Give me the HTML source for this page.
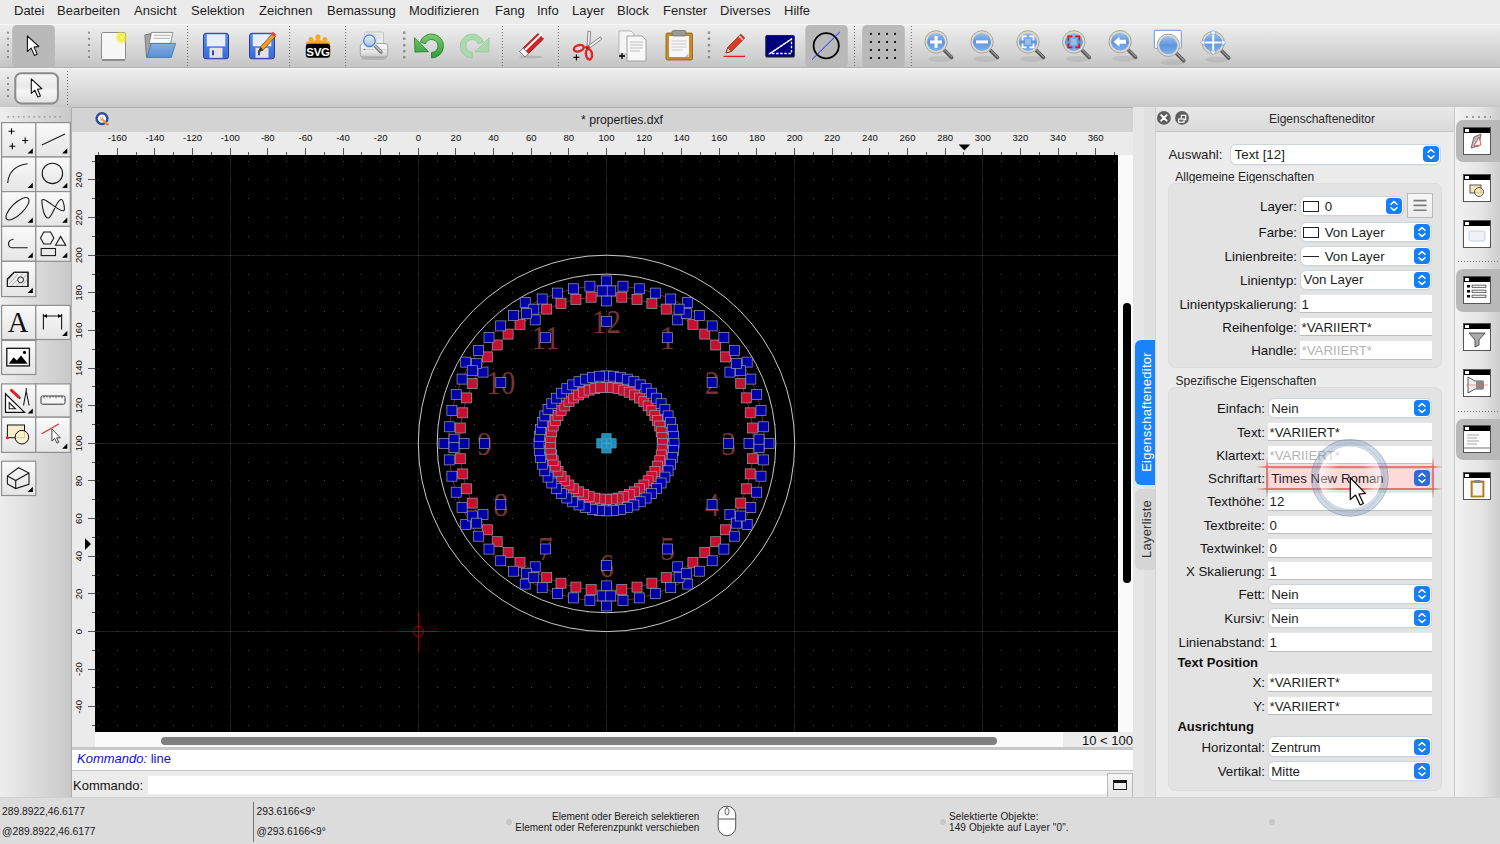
<!DOCTYPE html>
<html><head><meta charset="utf-8">
<style>
*{box-sizing:border-box}
html,body{margin:0;padding:0}
body{width:1500px;height:844px;position:relative;overflow:hidden;background:#ececec;font-family:"Liberation Sans",sans-serif;color:#1d1d1d;font-size:13px}
.abs{position:absolute}
.t{position:absolute;white-space:nowrap;line-height:1}
#menubar{left:0;top:0;width:1500px;height:24px;background:#ebebeb}
#menubar span{position:absolute;top:2.8px;font-size:13px;color:#1e1e1e}
#tb1{left:0;top:24px;width:1500px;height:44px;background:linear-gradient(#eeeeee,#e0e0e0 35%,#d0d0d0 75%,#c4c4c4);border-top:1px solid #f7f7f7;border-bottom:1.5px solid #b0b0b0}
#tb2{left:0;top:68px;width:1500px;height:40px;background:linear-gradient(#ededed,#e0e0e0 40%,#d0d0d0 85%,#c8c8c8);border-top:1px solid #f7f7f7;border-bottom:1.5px solid #b2b2b2}
.grip{position:absolute;width:3px;background:radial-gradient(circle,#8c8c8c 1px,transparent 1.3px) 0 0/3px 6px}
.dsep{position:absolute;width:1px;background:linear-gradient(#6e6e6e 50%,transparent 50%) 0 0/1px 3px}
.sel{position:absolute;background:#b9b9b9;border-radius:5px}
#left{left:0;top:107px;width:72px;height:691px;background:linear-gradient(90deg,#ededed 0,#e6e6e6 55%,#cfcfcf 90%,#c2c2c2 100%)}
.lb{position:absolute;width:34px;height:34px;background:linear-gradient(#fbfbfb,#ececec 60%,#e4e4e4);border:1px solid #a9a9a9}
.lb svg{position:absolute;left:0;top:0}
#mdititle{left:72px;top:108px;width:1061px;height:24px;background:#d3d3d3}
#rulertop{left:72px;top:132px;width:1061px;height:23px;background:#ebebeb}
#rulerleft{left:72px;top:155px;width:23px;height:592px;background:#ebebeb}
#vscroll{left:1118px;top:155px;width:15px;height:577px;background:#fafafa}
#hscroll{left:95px;top:732px;width:1038px;height:15px;background:#fafafa}
#cmdhist{left:72px;top:747px;width:1061px;height:24px;background:#fff;border-top:3px solid #c8c8c8;border-bottom:1px solid #c4c4c4}
#cmdrow{left:72px;top:771px;width:1061px;height:27px;background:#ebebeb}
#docktabs{left:1133px;top:107px;width:22px;height:691px;background:#e6e6e6}
#dock{left:1155px;top:107px;width:300px;height:691px;background:#ececec;border-left:1px solid #cfcfcf}
#rtb{left:1455px;top:107px;width:45px;height:691px;background:linear-gradient(90deg,#f1f1f1,#e4e4e4 60%,#cdcdcd)}
#status{left:0;top:798px;width:1500px;height:46px;background:#dcdcdc}
.lbl{position:absolute;text-align:right;font-size:13px;color:#1d1d1d;white-space:nowrap;line-height:1}
.cb{position:absolute;height:21px;background:#fff;border:1px solid #d3d3d3;border-radius:6px;box-shadow:0 0.5px 1px rgba(0,0,0,.08)}
.cb .v{position:absolute;left:4px;top:4px;font-size:13px;line-height:1;white-space:nowrap;color:#1d1d1d}
.step{position:absolute;right:2px;top:2px;width:16px;height:16px;background:#137cf6;border-radius:4px}
.inp{position:absolute;height:20px;background:#fff;border-bottom:1px solid #c0c0c0;border-top:1px solid #e8e8e8}
.inp .v{position:absolute;left:2px;top:4px;font-size:13px;line-height:1;white-space:nowrap;color:#1d1d1d}
.grp{position:absolute;background:#e3e3e3;border-radius:6px;border:1px solid #dedede}
.rb{position:absolute;left:1463px;width:28px;height:28px;background:#fff;border:1px solid #555}
.rb:before{content:"";position:absolute;left:0;top:0;right:0;height:5px;background:#000}
.rb:after{content:"";position:absolute;left:1px;top:1px;width:4px;height:3px;background:#fff}
</style></head><body>
<div id="menubar" class="abs">
<span style="left:14px">Datei</span><span style="left:57px">Bearbeiten</span><span style="left:134px">Ansicht</span><span style="left:191px">Selektion</span><span style="left:259px">Zeichnen</span><span style="left:327px">Bemassung</span><span style="left:409px">Modifizieren</span><span style="left:495px">Fang</span><span style="left:537px">Info</span><span style="left:572px">Layer</span><span style="left:617px">Block</span><span style="left:663px">Fenster</span><span style="left:720px">Diverses</span><span style="left:784px">Hilfe</span>
</div>
<div id="tb1" class="abs"></div>
<div id="tb2" class="abs"></div>
<svg class="abs" style="left:0;top:22px" width="1500" height="86" viewBox="0 22 1500 86">
<defs><linearGradient id="lg" x1="0" y1="0" x2="0" y2="1"><stop offset="0" stop-color="#9cc0ee"/><stop offset=".5" stop-color="#5d95dc"/><stop offset="1" stop-color="#7fb0ee"/></linearGradient><linearGradient id="fl" x1="0" y1="0" x2="0" y2="1"><stop offset="0" stop-color="#5a8fe8"/><stop offset="1" stop-color="#3a6ad8"/></linearGradient><linearGradient id="b2" x1="0" y1="0" x2="0" y2="1"><stop offset="0" stop-color="#f6f6f6"/><stop offset=".45" stop-color="#e9e9e9"/><stop offset=".6" stop-color="#f7f7f7"/><stop offset="1" stop-color="#e2e2e2"/></linearGradient><radialGradient id="glow"><stop offset="0" stop-color="#ffffc0"/><stop offset=".35" stop-color="#f2ea2a"/><stop offset="1" stop-color="#f2ea2a" stop-opacity="0"/></radialGradient></defs>
<rect x="7.0" y="31.7" width="2" height="2" fill="#8e8e8e"/><rect x="7.0" y="37.8" width="2" height="2" fill="#8e8e8e"/><rect x="7.0" y="44.0" width="2" height="2" fill="#8e8e8e"/><rect x="7.0" y="50.0" width="2" height="2" fill="#8e8e8e"/><rect x="7.0" y="56.0" width="2" height="2" fill="#8e8e8e"/>
<rect x="12.2" y="25.0" width="42.7" height="42.5" rx="4.5" fill="#b9b9b9"/>
<path transform="translate(27.4 35.9) scale(1.00)" d="M0 0V15.6L3.8 12.2 7 19.5 9.8 18.3 6.7 11.2 11.4 10.6z" fill="#fff" stroke="#111" stroke-width="1.10" stroke-linejoin="round"/>
<rect x="88.0" y="31.7" width="2" height="2" fill="#8e8e8e"/><rect x="88.0" y="37.8" width="2" height="2" fill="#8e8e8e"/><rect x="88.0" y="44.0" width="2" height="2" fill="#8e8e8e"/><rect x="88.0" y="50.0" width="2" height="2" fill="#8e8e8e"/><rect x="88.0" y="56.0" width="2" height="2" fill="#8e8e8e"/>
<rect x="101.5" y="32.5" width="24" height="27" rx="1.2" fill="#f7f7f7" stroke="#8c8c8c" stroke-width="1"/><path d="M102 60.3h23" stroke="#888" stroke-width="1.2"/><circle cx="121.5" cy="37.6" r="7" fill="url(#glow)"/>
<defs><linearGradient id="fg" x1="0" y1="0" x2="0" y2="1"><stop offset="0" stop-color="#86aee0"/><stop offset="1" stop-color="#5b8fd6"/></linearGradient></defs>
<path d="M144.8 35 150.5 33.6 150 56.8H146.5z" fill="#a4a4a4" stroke="#6a6a6a" stroke-width=".8"/><path d="M151.4 32.4H172.8L170.6 43.6H149.2z" fill="#fafafa" stroke="#777" stroke-width=".8"/><path d="M154 35.3h16.5M153.5 38.3h16.5" stroke="#bdbdbd" stroke-width="1.2"/><path d="M151.4 43.4H175.6L171.3 57.4H146.7C148.6 52 150 47 151.4 43.4z" fill="url(#fg)" stroke="#3f70b8" stroke-width=".8"/>
<path d="M187.6 26V66" stroke="#6a6a6a" stroke-width="1" stroke-dasharray="1 2"/>
<rect x="203.5" y="33.3" width="25" height="25.5" rx="2.5" fill="url(#fl)" stroke="#2a3a9a" stroke-width="1"/><rect x="206.8" y="34.3" width="18.5" height="12" fill="#e8eefa"/><rect x="209.5" y="47.8" width="13" height="10" fill="#e2e2e2"/><rect x="212.0" y="50.3" width="2" height="5" fill="#2a4ac8"/>
<rect x="249.5" y="33.3" width="25" height="25.5" rx="2.5" fill="url(#fl)" stroke="#2a3a9a" stroke-width="1"/><rect x="252.8" y="34.3" width="18.5" height="12" fill="#e8eefa"/><rect x="255.5" y="47.8" width="13" height="10" fill="#e2e2e2"/><rect x="258.0" y="50.3" width="2" height="5" fill="#2a4ac8"/>
<path d="M258.5 52l2-5 12-13.5 3 2.8-12 13.5z" fill="#f0a020" stroke="#8a4a10" stroke-width=".8"/><path d="M271 33.8l2-2 3.2 3-2 2z" fill="#e04040"/><path d="M258.5 52l2-5 3 3z" fill="#333"/>
<path d="M289.6 26V66" stroke="#6a6a6a" stroke-width="1" stroke-dasharray="1 2"/>
<g><circle cx="318" cy="37" r="2.6" fill="#f5a623"/><circle cx="311" cy="39.5" r="2.4" fill="#f5a623"/><circle cx="325" cy="39.5" r="2.4" fill="#f5a623"/><circle cx="308" cy="43.5" r="2.2" fill="#f5a623"/><circle cx="328" cy="43.5" r="2.2" fill="#f5a623"/><path d="M306 44l12-5 12 5z" fill="#f5a623"/><rect x="305.8" y="43.8" width="24.4" height="14" rx="3" fill="#000"/><text x="318" y="55.6" font-family="Liberation Sans" font-weight="bold" font-size="11.5" fill="#fff" text-anchor="middle" letter-spacing="-.3">SVG</text></g>
<path d="M345.6 26V66" stroke="#6a6a6a" stroke-width="1" stroke-dasharray="1 2"/>
<defs><linearGradient id="pg" x1="0" y1="0" x2="0" y2="1"><stop offset="0" stop-color="#fbfbfb"/><stop offset=".6" stop-color="#e6e6e6"/><stop offset="1" stop-color="#c8c8c8"/></linearGradient><linearGradient id="lg2" x1="0" y1="0" x2="0" y2="1"><stop offset="0" stop-color="#e4eefa"/><stop offset=".55" stop-color="#c6d8ee"/><stop offset="1" stop-color="#a9c4e6"/></linearGradient></defs>
<ellipse cx="374" cy="58.5" rx="13" ry="1.6" fill="#000" opacity=".12"/><rect x="364.5" y="32" width="19" height="14" rx="1" fill="#ececec" stroke="#b8b8b8" stroke-width=".8"/><path d="M367 35h14M367 38h14" stroke="#d2d2d2" stroke-width="1"/><rect x="360.3" y="43.5" width="27.5" height="13.5" rx="2.5" fill="url(#pg)" stroke="#9c9c9c" stroke-width=".9"/><path d="M362.5 49.5h23" stroke="#c8c8c8" stroke-width=".8"/><circle cx="364.5" cy="49.5" r=".7" fill="#666"/><path d="M374.8 45.6l6.2 6.4" stroke="#777" stroke-width="3.4" stroke-linecap="round"/><path d="M375 45.4l6 6.2" stroke="#c4c4c4" stroke-width="1.4" stroke-linecap="round"/><circle cx="369.5" cy="40.7" r="7.2" fill="#f4f4f4" stroke="#c8c8c8" stroke-width=".6"/><circle cx="369.5" cy="40.7" r="5.8" fill="url(#lg2)" stroke="#4a82cc" stroke-width="1.3"/>
<rect x="403.0" y="31.5" width="2.4" height="2.4" fill="#8e8e8e"/><rect x="403.0" y="37.5" width="2.4" height="2.4" fill="#8e8e8e"/><rect x="403.0" y="44.0" width="2.4" height="2.4" fill="#8e8e8e"/><rect x="403.0" y="50.0" width="2.4" height="2.4" fill="#8e8e8e"/><rect x="403.0" y="56.0" width="2.4" height="2.4" fill="#8e8e8e"/>
<defs><linearGradient id="ug" x1="0" y1="0" x2="0" y2="1"><stop offset="0" stop-color="#7ccf6a"/><stop offset="1" stop-color="#2e9a3a"/></linearGradient></defs>
<path d="M420.2 41.9A12 12 0 1 1 431.5 58V52.5A6.5 6.5 0 1 0 425.4 43.8zM414.4 37.7 415 52.1 428.5 51.7z" fill="url(#ug)" stroke="#1e7a2e" stroke-width=".8" stroke-linejoin="round"/>
<path transform="translate(903.7 0) scale(-1 1)" d="M420.2 41.9A12 12 0 1 1 431.5 58V52.5A6.5 6.5 0 1 0 425.4 43.8zM414.4 37.7 415 52.1 428.5 51.7z" fill="#a6dba8" stroke="#8cc49a" stroke-width=".8" stroke-linejoin="round" opacity=".9"/>
<path d="M502.4 26V66" stroke="#6a6a6a" stroke-width="1" stroke-dasharray="1 2"/>
<ellipse cx="531" cy="57" rx="12" ry="1.5" fill="#000" opacity=".12"/><path d="M519.5 51.5 538 33.5l5.5 5.5-18.5 18z" fill="#d42020" stroke="#8a1010" stroke-width=".8"/><path d="M522.5 48.5 540 31.5" stroke="#fff" stroke-width="2.2" transform="translate(1.5 2.5)"/><path d="M519.5 51.5l3.5-3.5 5.5 5.5-3.5 3.5z" fill="#f4f4f4" stroke="#777" stroke-width=".8"/>
<path d="M558.4 26V66" stroke="#6a6a6a" stroke-width="1" stroke-dasharray="1 2"/>
<path d="M588 31.2 590.6 31.4 589.6 47.2 587 47z" fill="#f6f6f6" stroke="#6a6a6a" stroke-width=".8"/><path d="M600.4 36.8 601.6 39.2 590.2 47.6 588.6 45.6z" fill="#f6f6f6" stroke="#6a6a6a" stroke-width=".8"/><path d="M583.8 47.6 588.2 46.4 589.6 50" stroke="#e02424" stroke-width="2"/><ellipse cx="578.8" cy="48.3" rx="5" ry="3" transform="rotate(-18 578.8 48.3)" fill="none" stroke="#e02424" stroke-width="2.4"/><ellipse cx="589" cy="54.3" rx="3" ry="5.2" transform="rotate(-8 589 54.3)" fill="none" stroke="#e02424" stroke-width="2.4"/><path d="M573.4 57.4h6M576.4 54.4v6" stroke="#000" stroke-width="1.1"/>
<path d="M619 31h12l3 3v20h-15z" fill="#f4f4f4" stroke="#aaa" stroke-width=".8"/><path d="M627 36h15l4 4v21h-19z" fill="#f8f8f8" stroke="#999" stroke-width=".9"/><path d="M630 42h13M630 45h13M630 48h13M630 51h10" stroke="#bbb" stroke-width="1"/><path d="M619 56h6M622 53v6" stroke="#000" stroke-width="1.3"/>
<rect x="666" y="33" width="26.5" height="27" rx="1.5" fill="#c88a2a" stroke="#8a5a18" stroke-width=".8"/><path d="M669 36h20v21h-20z" fill="#f7f7f7"/><path d="M671.5 41h15M671.5 44h15M671.5 47h15M671.5 50h11" stroke="#c8c8c8" stroke-width="1"/><rect x="672" y="30.5" width="14" height="5.5" rx="1.5" fill="#9a9a90" stroke="#666" stroke-width=".7"/><path d="M685 57l3.5-3.5v3.5z" fill="#bbb"/>
<rect x="707.8" y="31.5" width="2.4" height="2.4" fill="#8e8e8e"/><rect x="707.8" y="37.5" width="2.4" height="2.4" fill="#8e8e8e"/><rect x="707.8" y="44.0" width="2.4" height="2.4" fill="#8e8e8e"/><rect x="707.8" y="50.0" width="2.4" height="2.4" fill="#8e8e8e"/><rect x="707.8" y="56.0" width="2.4" height="2.4" fill="#8e8e8e"/>
<path d="M723.5 56.4h21.5" stroke="#e02020" stroke-width="1.3"/><path d="M726 53l1.8-5.5 13-13.2 3.8 3.7-13 13.2z" fill="#e03a2a" stroke="#7a2a10" stroke-width=".9"/><path d="M726 53l1.8-5.5 3.7 3.8z" fill="#f0c8a0" stroke="#7a2a10" stroke-width=".7"/><path d="M739 36l3.8 3.7" stroke="#ddd" stroke-width="1.4"/>
<rect x="765.8" y="35.5" width="28.5" height="21.5" rx="1" fill="#00007e" stroke="#222" stroke-width="1"/><path d="M770 53.5 791.5 39v14.5z" fill="none" stroke="#fff" stroke-width="1.3" stroke-dasharray="2.5 1.6"/><path d="M770 53.5 791.5 39" stroke="#fff" stroke-width="1.3"/>
<rect x="805.3" y="25.0" width="42.5" height="42.5" rx="4.5" fill="#b9b9b9"/>
<circle cx="826.2" cy="45.8" r="12.6" fill="none" stroke="#000" stroke-width="1.8"/><path d="M812 59.6 839.8 32" stroke="#1030ff" stroke-width="1"/>
<path d="M854.5 26V66" stroke="#6a6a6a" stroke-width="1" stroke-dasharray="1 2"/>
<rect x="862.2" y="25.0" width="42.6" height="42.5" rx="4.5" fill="#b9b9b9"/>
<rect x="869.9" y="32.9" width="2" height="2" fill="#111"/>
<rect x="869.9" y="41.0" width="2" height="2" fill="#111"/>
<rect x="869.9" y="49.0" width="2" height="2" fill="#111"/>
<rect x="869.9" y="57.0" width="2" height="2" fill="#111"/>
<rect x="878.0" y="32.9" width="2" height="2" fill="#111"/>
<rect x="878.0" y="41.0" width="2" height="2" fill="#111"/>
<rect x="878.0" y="49.0" width="2" height="2" fill="#111"/>
<rect x="878.0" y="57.0" width="2" height="2" fill="#111"/>
<rect x="886.0" y="32.9" width="2" height="2" fill="#111"/>
<rect x="886.0" y="41.0" width="2" height="2" fill="#111"/>
<rect x="886.0" y="49.0" width="2" height="2" fill="#111"/>
<rect x="886.0" y="57.0" width="2" height="2" fill="#111"/>
<rect x="894.0" y="32.9" width="2" height="2" fill="#111"/>
<rect x="894.0" y="41.0" width="2" height="2" fill="#111"/>
<rect x="894.0" y="49.0" width="2" height="2" fill="#111"/>
<rect x="894.0" y="57.0" width="2" height="2" fill="#111"/>
<path d="M911.3 26V66" stroke="#6a6a6a" stroke-width="1" stroke-dasharray="1 2"/>
<g><ellipse cx="940.1" cy="58.9" rx="12" ry="3" fill="#000" opacity=".07"/><path d="M944.1 49.9l7.5 7.5" stroke="#555" stroke-width="3.6" stroke-linecap="round"/><path d="M944.4 49.6l7.5 7.5" stroke="#999" stroke-width="1.2" stroke-linecap="round"/><circle cx="936.1" cy="41.9" r="11.2" fill="#ddd9cf" stroke="#aaa69a" stroke-width="1"/><circle cx="936.1" cy="41.9" r="9" fill="url(#lg)"/><path d="M936.1 36v11.8M930.2 41.9H942" stroke="#fff" stroke-width="3"/></g>
<g><ellipse cx="986.0" cy="58.9" rx="12" ry="3" fill="#000" opacity=".07"/><path d="M990.0 49.9l7.5 7.5" stroke="#555" stroke-width="3.6" stroke-linecap="round"/><path d="M990.3 49.6l7.5 7.5" stroke="#999" stroke-width="1.2" stroke-linecap="round"/><circle cx="982.0" cy="41.9" r="11.2" fill="#ddd9cf" stroke="#aaa69a" stroke-width="1"/><circle cx="982.0" cy="41.9" r="9" fill="url(#lg)"/><path d="M976 41.9h12" stroke="#fff" stroke-width="3"/></g>
<g><ellipse cx="1032.0" cy="58.9" rx="12" ry="3" fill="#000" opacity=".07"/><path d="M1036.0 49.9l7.5 7.5" stroke="#555" stroke-width="3.6" stroke-linecap="round"/><path d="M1036.3 49.6l7.5 7.5" stroke="#999" stroke-width="1.2" stroke-linecap="round"/><circle cx="1028.0" cy="41.9" r="11.2" fill="#ddd9cf" stroke="#aaa69a" stroke-width="1"/><circle cx="1028.0" cy="41.9" r="9" fill="url(#lg)"/><path d="M1022.5 40.4v-4h4M1029.5 36.4h4v4M1033.5 43.4v4h-4M1026.5 47.4h-4v-4" stroke="#fff" stroke-width="1.8" fill="none"/><rect x="1025.0" y="38.9" width="6" height="6" fill="#a8c4ec" opacity=".8"/></g>
<g><ellipse cx="1077.8" cy="58.9" rx="12" ry="3" fill="#000" opacity=".07"/><path d="M1081.8 49.9l7.5 7.5" stroke="#555" stroke-width="3.6" stroke-linecap="round"/><path d="M1082.1 49.6l7.5 7.5" stroke="#999" stroke-width="1.2" stroke-linecap="round"/><circle cx="1073.8" cy="41.9" r="11.2" fill="#ddd9cf" stroke="#aaa69a" stroke-width="1"/><circle cx="1073.8" cy="41.9" r="9" fill="url(#lg)"/><path d="M1068.3 40.4v-4h4M1075.3 36.4h4v4M1079.3 43.4v4h-4M1072.3 47.4h-4v-4" stroke="#e01010" stroke-width="1.8" fill="none"/><rect x="1070.8" y="38.9" width="6" height="6" fill="#a8c4ec" opacity=".8"/></g>
<g><ellipse cx="1124.1" cy="58.7" rx="12" ry="3" fill="#000" opacity=".07"/><path d="M1128.1 49.7l7.5 7.5" stroke="#555" stroke-width="3.6" stroke-linecap="round"/><path d="M1128.4 49.4l7.5 7.5" stroke="#999" stroke-width="1.2" stroke-linecap="round"/><circle cx="1120.1" cy="41.7" r="11.2" fill="#ddd9cf" stroke="#aaa69a" stroke-width="1"/><circle cx="1120.1" cy="41.7" r="9" fill="url(#lg)"/><path d="M1113.5 41.7l6-5v3h6.5v4h-6.5v3z" fill="#fff"/></g>
<rect x="1154.3" y="30.3" width="27" height="18" rx="1" fill="#fff" stroke="#6b94cc" stroke-width="1"/>
<g><ellipse cx="1172.3" cy="62.3" rx="12" ry="3" fill="#000" opacity=".07"/><path d="M1176.3 53.3l7.5 7.5" stroke="#555" stroke-width="3.6" stroke-linecap="round"/><path d="M1176.6 53.0l7.5 7.5" stroke="#999" stroke-width="1.2" stroke-linecap="round"/><circle cx="1168.3" cy="45.3" r="11.2" fill="#ddd9cf" stroke="#aaa69a" stroke-width="1"/><circle cx="1168.3" cy="45.3" r="9" fill="url(#lg)"/></g>
<g><ellipse cx="1217.2" cy="59.6" rx="12" ry="3" fill="#000" opacity=".07"/><path d="M1221.2 50.6l7.5 7.5" stroke="#555" stroke-width="3.6" stroke-linecap="round"/><path d="M1221.5 50.3l7.5 7.5" stroke="#999" stroke-width="1.2" stroke-linecap="round"/><circle cx="1213.2" cy="42.6" r="11.2" fill="#ddd9cf" stroke="#aaa69a" stroke-width="1"/><circle cx="1213.2" cy="42.6" r="9" fill="url(#lg)"/><path d="M1213.2 31v23M1201.5 42.6h23" stroke="#fff" stroke-width="2"/><path d="M1213.2 30l-3 4h6zM1213.2 55l-3-4h6zM1200.5 42.6l4-3v6zM1226 42.6l-4-3v6z" fill="#fff" stroke="#5a8ad0" stroke-width=".5"/></g>
<rect x="7.0" y="76.9" width="2" height="2" fill="#8e8e8e"/><rect x="7.0" y="83.0" width="2" height="2" fill="#8e8e8e"/><rect x="7.0" y="89.0" width="2" height="2" fill="#8e8e8e"/><rect x="7.0" y="95.0" width="2" height="2" fill="#8e8e8e"/>
<rect x="15.3" y="73.2" width="42.6" height="30.2" rx="6" fill="url(#b2)" stroke="#8a8a8a" stroke-width="2"/>
<path transform="translate(31.3 78.9) scale(0.93)" d="M0 0V15.6L3.8 12.2 7 19.5 9.8 18.3 6.7 11.2 11.4 10.6z" fill="#fff" stroke="#111" stroke-width="1.18" stroke-linejoin="round"/>
<path d="M67.5 71V106" stroke="#6a6a6a" stroke-width="1" stroke-dasharray="1 2"/>
</svg>
<div id="left" class="abs"></div>
<div class="abs" style="left:0;top:107px;width:72px;height:691px;background:linear-gradient(90deg,#eeeeee 0,#dcdcdc 45%,#c9c9c9 97%,#b9b9b9 100%)"></div>
<div class="abs" style="left:71px;top:107px;width:1px;height:691px;background:#b0b0b0"></div>
<svg class="abs" style="left:0;top:107px" width="72" height="400" viewBox="0 107 72 400">
<defs><linearGradient id="lbg" x1="0" y1="0" x2="0" y2="1"><stop offset="0" stop-color="#fafafa"/><stop offset=".5" stop-color="#efefef"/><stop offset="1" stop-color="#e6e6e6"/></linearGradient></defs>
<rect x="7.5" y="116" width="1.6" height="1.6" fill="#a0a0a0"/>
<rect x="12.7" y="116" width="1.6" height="1.6" fill="#a0a0a0"/>
<rect x="17.9" y="116" width="1.6" height="1.6" fill="#a0a0a0"/>
<rect x="23.1" y="116" width="1.6" height="1.6" fill="#a0a0a0"/>
<rect x="28.3" y="116" width="1.6" height="1.6" fill="#a0a0a0"/>
<rect x="33.5" y="116" width="1.6" height="1.6" fill="#a0a0a0"/>
<rect x="38.7" y="116" width="1.6" height="1.6" fill="#a0a0a0"/>
<rect x="43.9" y="116" width="1.6" height="1.6" fill="#a0a0a0"/>
<rect x="49.1" y="116" width="1.6" height="1.6" fill="#a0a0a0"/>
<rect x="54.3" y="116" width="1.6" height="1.6" fill="#a0a0a0"/>
<rect x="59.5" y="116" width="1.6" height="1.6" fill="#a0a0a0"/>
<rect x="1.60" y="122.60" width="34.20" height="34.40" fill="url(#lbg)" stroke="#8f8f8f" stroke-width="1.2"/><path d="M8.5 131.3h6M11.5 128.3v6M22.2 140.5h6M25.2 137.5v6M9.3 146.2h6M12.3 143.2v6" stroke="#000" stroke-width="1.1"/><path d="M27.6 153.4h5.2v-5.2z" fill="#000"/>
<rect x="35.80" y="122.60" width="34.50" height="34.40" fill="url(#lbg)" stroke="#8f8f8f" stroke-width="1.2"/><path d="M41.8 144.9 65 133.9" fill="none" stroke="#1a1a1a" stroke-width="1.1"/><path d="M62.1 153.4h5.2v-5.2z" fill="#000"/>
<rect x="1.60" y="157.00" width="34.20" height="34.60" fill="url(#lbg)" stroke="#8f8f8f" stroke-width="1.2"/><path d="M7.7 183C8.5 172 16 165 27.6 163.8" fill="none" stroke="#1a1a1a" stroke-width="1.1"/><path d="M27.6 188.0h5.2v-5.2z" fill="#000"/>
<rect x="35.80" y="157.00" width="34.50" height="34.60" fill="url(#lbg)" stroke="#8f8f8f" stroke-width="1.2"/><circle cx="52.4" cy="173.4" r="10.2" fill="none" stroke="#1a1a1a" stroke-width="1.1"/><path d="M62.1 188.0h5.2v-5.2z" fill="#000"/>
<rect x="1.60" y="191.60" width="34.20" height="34.80" fill="url(#lbg)" stroke="#8f8f8f" stroke-width="1.2"/><ellipse cx="17.5" cy="208.8" rx="15" ry="5.8" transform="rotate(-44 17.5 208.8)" fill="none" stroke="#1a1a1a" stroke-width="1.1"/><path d="M27.6 222.8h5.2v-5.2z" fill="#000"/>
<rect x="35.80" y="191.60" width="34.50" height="34.80" fill="url(#lbg)" stroke="#8f8f8f" stroke-width="1.2"/><path d="M41.8 200.2C42.5 212 45.5 218.5 48.5 218C52.5 217.5 56 200.5 61 199.5C63.5 199 65 209 64 210.5C60.5 214 44.5 196 41.8 200.2z" fill="none" stroke="#1a1a1a" stroke-width="1.1"/><path d="M62.1 222.8h5.2v-5.2z" fill="#000"/>
<rect x="1.60" y="226.40" width="34.20" height="34.90" fill="url(#lbg)" stroke="#8f8f8f" stroke-width="1.2"/><path d="M13.5 239.2C9.5 239.5 8.3 242.5 8.5 244.2 8.8 246.5 10.5 247.8 12.5 247.8H27.7" fill="none" stroke="#1a1a1a" stroke-width="1.1"/><path d="M27.6 257.7h5.2v-5.2z" fill="#000"/>
<rect x="35.80" y="226.40" width="34.50" height="34.90" fill="url(#lbg)" stroke="#8f8f8f" stroke-width="1.2"/><path d="M40.5 238l3.3-6h6.7l3.3 6-3.3 6h-6.7z" fill="none" stroke="#1a1a1a" stroke-width="1.1"/><path d="M55.5 245.2l5.1-8.8 5.1 8.8z" fill="none" stroke="#1a1a1a" stroke-width="1.1"/><rect x="41.2" y="248.5" width="14.3" height="7.1" fill="none" stroke="#1a1a1a" stroke-width="1.1"/><path d="M62.1 257.7h5.2v-5.2z" fill="#000"/>
<rect x="1.60" y="261.30" width="34.20" height="35.30" fill="url(#lbg)" stroke="#8f8f8f" stroke-width="1.2"/><path d="M7.4 279 14.2 272.2H28V286.5H7.4z" fill="none" stroke="#1a1a1a" stroke-width="1.1"/><path d="M9 284l9-10M11 286.5l12-13M16 286.5l11-12M21 286.5l7-8M7.5 281l6-7" stroke="#888" stroke-width=".6"/><circle cx="20.6" cy="279.8" r="2.9" fill="#eee" stroke="#1a1a1a" stroke-width="1"/><path d="M7.4 279 14.2 272.2H28V286.5H7.4z" fill="none" stroke="#1a1a1a" stroke-width="1.1"/><path d="M27.6 293.0h5.2v-5.2z" fill="#000"/>
<rect x="1.60" y="305.40" width="34.20" height="34.10" fill="url(#lbg)" stroke="#8f8f8f" stroke-width="1.2"/><text x="18.1" y="331.7" font-family="Liberation Serif" font-size="28.5" text-anchor="middle" fill="#111">A</text>
<rect x="35.80" y="305.40" width="34.50" height="34.10" fill="url(#lbg)" stroke="#8f8f8f" stroke-width="1.2"/><path d="M43.4 313.9v15.6M61.6 313.9v15.6M43.4 316h18.2" fill="none" stroke="#1a1a1a" stroke-width="1.1"/><path d="M43.4 316l3.6-2v4zM61.6 316l-3.6-2v4z" fill="#000"/><path d="M62.1 335.9h5.2v-5.2z" fill="#000"/>
<rect x="1.60" y="340.50" width="34.20" height="34.00" fill="url(#lbg)" stroke="#8f8f8f" stroke-width="1.2"/><rect x="6.8" y="348.3" width="22.6" height="17.6" fill="#fff" stroke="#111" stroke-width="1.3"/><path d="M8.8 363.8l4.8-6.5 3.2 3.3 4.2-5.2 6.6 8.4z" fill="#000"/><circle cx="24.5" cy="352.4" r="1.6" fill="#000"/>
<rect x="1.60" y="383.90" width="34.20" height="33.30" fill="url(#lbg)" stroke="#8f8f8f" stroke-width="1.2"/><path d="M5.5 393.7V412.3H24.5z" fill="#fff" stroke="#111" stroke-width="1.2"/><path d="M9.2 402.5v6.3h6.3z" fill="none" stroke="#1a1a1a" stroke-width="1.1"/><path d="M10.5 389.5l8.5 7.8" stroke="#e02020" stroke-width="3"/><path d="M19 397.3l1.3 1.3" stroke="#333" stroke-width="2"/><path d="M26.2 388v3M26.2 391l-2.7 14.5M26.2 391l2.9 14.5" fill="none" stroke="#1a1a1a" stroke-width="1.1"/><path d="M27.6 413.6h5.2v-5.2z" fill="#000"/>
<rect x="35.80" y="383.90" width="34.50" height="33.30" fill="url(#lbg)" stroke="#8f8f8f" stroke-width="1.2"/><rect x="41" y="396" width="24" height="8.2" rx="1.5" fill="#f6f6f6" stroke="#333" stroke-width="1"/><path d="M44 396v2.5M47 396v1.5M50 396v2.5M53 396v1.5M56 396v2.5M59 396v1.5M62 396v2.5" stroke="#333" stroke-width=".7"/>
<rect x="1.60" y="417.20" width="34.20" height="35.20" fill="url(#lbg)" stroke="#8f8f8f" stroke-width="1.2"/><rect x="7.4" y="425" width="17.1" height="12.7" fill="#fbf1c9" stroke="#111" stroke-width="1"/><circle cx="21.9" cy="437.2" r="6.8" fill="#fbf1c9" fill-opacity=".85" stroke="#111" stroke-width="1"/><circle cx="7.4" cy="437.7" r="1.5" fill="#e02020"/>
<rect x="35.80" y="417.20" width="34.50" height="35.20" fill="url(#lbg)" stroke="#8f8f8f" stroke-width="1.2"/><path d="M41.7 433.8 58.7 424" stroke="#e03030" stroke-width="1.2"/><path d="M51.9 428.9v12.2l2.8-2.6 2.3 4.6 1.8-.8-2.2-4.5h3.7z" fill="#fff" stroke="#333" stroke-width=".9"/><path d="M62.1 448.8h5.2v-5.2z" fill="#000"/>
<rect x="1.60" y="461.20" width="34.20" height="34.30" fill="url(#lbg)" stroke="#8f8f8f" stroke-width="1.2"/><path d="M7.4 475.9l11.2-8.2 10.4 5.3v11.3l-13.3 4.3-8.3-4.7z" fill="none" stroke="#1a1a1a" stroke-width="1.1"/><path d="M7.4 475.9l8.3 4.6 13.3-7.5M15.7 480.5v8.1" fill="none" stroke="#1a1a1a" stroke-width="1.1"/><path d="M27.6 491.9h5.2v-5.2z" fill="#000"/>
</svg>
<div id="mdititle" class="abs"></div>
<div class="t" style="left:581px;top:114px;font-size:12.2px">* properties.dxf</div>
<svg class="abs" style="left:94px;top:110px" width="17" height="17" viewBox="0 0 17 17"><circle cx="8" cy="8.6" r="5.4" fill="#fff" stroke="#2c4c9c" stroke-width="2.4"/><path d="M6 6.5l1 3M9 6l-1 4M5.5 10h3" stroke="#c66" stroke-width=".6"/><path d="M8.5 9.5l4.5 4.5" stroke="#f0a020" stroke-width="2.2" stroke-linecap="round"/><circle cx="13.4" cy="14.3" r="1.2" fill="#e07070"/></svg>
<div id="rulertop" class="abs"></div>
<div id="rulerleft" class="abs"></div>
<svg class="abs" style="left:72px;top:132px" width="1061" height="615" viewBox="72 132 1061 615">
<path stroke="#555" stroke-width="1" d="M98.5 152V155M117.5 148V155M136.5 152V155M154.5 148V155M173.5 152V155M192.5 148V155M211.5 152V155M230.5 148V155M248.5 152V155M267.5 148V155M286.5 152V155M305.5 148V155M324.5 152V155M343.5 148V155M361.5 152V155M380.5 148V155M399.5 152V155M418.5 148V155M437.5 152V155M455.5 148V155M474.5 152V155M493.5 148V155M512.5 152V155M531.5 148V155M550.5 152V155M568.5 148V155M587.5 152V155M606.5 148V155M625.5 152V155M644.5 148V155M662.5 152V155M681.5 148V155M700.5 152V155M719.5 148V155M738.5 152V155M756.5 148V155M775.5 152V155M794.5 148V155M813.5 152V155M832.5 148V155M851.5 152V155M869.5 148V155M888.5 152V155M907.5 148V155M926.5 152V155M945.5 148V155M963.5 152V155M982.5 148V155M1001.5 152V155M1020.5 148V155M1039.5 152V155M1058.5 148V155M1076.5 152V155M1095.5 148V155M1114.5 152V155M92 725.5H95M88 706.5H95M92 687.5H95M88 669.5H95M92 650.5H95M88 631.5H95M92 612.5H95M88 593.5H95M92 575.5H95M88 556.5H95M92 537.5H95M88 518.5H95M92 499.5H95M88 480.5H95M92 462.5H95M88 443.5H95M92 424.5H95M88 405.5H95M92 386.5H95M88 368.5H95M92 349.5H95M88 330.5H95M92 311.5H95M88 292.5H95M92 274.5H95M88 255.5H95M92 236.5H95M88 217.5H95M92 198.5H95M88 179.5H95M92 161.5H95"/>
<g font-family="Liberation Sans" font-size="9.5" fill="#0a0a0a" text-anchor="middle"><text x="117.3" y="141">-160</text><text x="154.9" y="141">-140</text><text x="192.5" y="141">-120</text><text x="230.2" y="141">-100</text><text x="267.8" y="141">-80</text><text x="305.4" y="141">-60</text><text x="343.0" y="141">-40</text><text x="380.7" y="141">-20</text><text x="418.3" y="141">0</text><text x="455.9" y="141">20</text><text x="493.6" y="141">40</text><text x="531.2" y="141">60</text><text x="568.8" y="141">80</text><text x="606.5" y="141">100</text><text x="644.1" y="141">120</text><text x="681.7" y="141">140</text><text x="719.3" y="141">160</text><text x="757.0" y="141">180</text><text x="794.6" y="141">200</text><text x="832.2" y="141">220</text><text x="869.9" y="141">240</text><text x="907.5" y="141">260</text><text x="945.1" y="141">280</text><text x="982.8" y="141">300</text><text x="1020.4" y="141">320</text><text x="1058.0" y="141">340</text><text x="1095.6" y="141">360</text><text transform="translate(81.5 706.8) rotate(-90)" x="0" y="0">-40</text><text transform="translate(81.5 669.1) rotate(-90)" x="0" y="0">-20</text><text transform="translate(81.5 631.5) rotate(-90)" x="0" y="0">0</text><text transform="translate(81.5 593.9) rotate(-90)" x="0" y="0">20</text><text transform="translate(81.5 556.2) rotate(-90)" x="0" y="0">40</text><text transform="translate(81.5 518.6) rotate(-90)" x="0" y="0">60</text><text transform="translate(81.5 481.0) rotate(-90)" x="0" y="0">80</text><text transform="translate(81.5 443.4) rotate(-90)" x="0" y="0">100</text><text transform="translate(81.5 405.7) rotate(-90)" x="0" y="0">120</text><text transform="translate(81.5 368.1) rotate(-90)" x="0" y="0">140</text><text transform="translate(81.5 330.5) rotate(-90)" x="0" y="0">160</text><text transform="translate(81.5 292.8) rotate(-90)" x="0" y="0">180</text><text transform="translate(81.5 255.2) rotate(-90)" x="0" y="0">200</text><text transform="translate(81.5 217.6) rotate(-90)" x="0" y="0">220</text><text transform="translate(81.5 179.9) rotate(-90)" x="0" y="0">240</text></g>
<path d="M958.6 144.6h11.6l-5.8 6z" fill="#000"/>
<path d="M85 538.2v11.8l6-5.9z" fill="#000"/>
</svg>
<svg class="abs" style="left:95px;top:155px" width="1023" height="577" viewBox="95 155 1023 577">
<rect x="95" y="155" width="1023" height="577" fill="#000"/>
<path stroke="#181818" stroke-width="1" d="M230.5 155V732M418.5 155V732M606.5 155V732M794.5 155V732M982.5 155V732"/>
<path stroke="#1f1f1f" stroke-width="1" d="M95 631.5H1118M95 443.5H1118M95 255.5H1118"/>
<path fill="#444" d="M98 725h1v1h-1zM98 706h1v1h-1zM98 687h1v1h-1zM98 669h1v1h-1zM98 650h1v1h-1zM98 631h1v1h-1zM98 612h1v1h-1zM98 593h1v1h-1zM98 575h1v1h-1zM98 556h1v1h-1zM98 537h1v1h-1zM98 518h1v1h-1zM98 499h1v1h-1zM98 480h1v1h-1zM98 462h1v1h-1zM98 443h1v1h-1zM98 424h1v1h-1zM98 405h1v1h-1zM98 386h1v1h-1zM98 368h1v1h-1zM98 349h1v1h-1zM98 330h1v1h-1zM98 311h1v1h-1zM98 292h1v1h-1zM98 274h1v1h-1zM98 255h1v1h-1zM98 236h1v1h-1zM98 217h1v1h-1zM98 198h1v1h-1zM98 179h1v1h-1zM98 161h1v1h-1zM117 725h1v1h-1zM117 706h1v1h-1zM117 687h1v1h-1zM117 669h1v1h-1zM117 650h1v1h-1zM117 631h1v1h-1zM117 612h1v1h-1zM117 593h1v1h-1zM117 575h1v1h-1zM117 556h1v1h-1zM117 537h1v1h-1zM117 518h1v1h-1zM117 499h1v1h-1zM117 480h1v1h-1zM117 462h1v1h-1zM117 443h1v1h-1zM117 424h1v1h-1zM117 405h1v1h-1zM117 386h1v1h-1zM117 368h1v1h-1zM117 349h1v1h-1zM117 330h1v1h-1zM117 311h1v1h-1zM117 292h1v1h-1zM117 274h1v1h-1zM117 255h1v1h-1zM117 236h1v1h-1zM117 217h1v1h-1zM117 198h1v1h-1zM117 179h1v1h-1zM117 161h1v1h-1zM136 725h1v1h-1zM136 706h1v1h-1zM136 687h1v1h-1zM136 669h1v1h-1zM136 650h1v1h-1zM136 631h1v1h-1zM136 612h1v1h-1zM136 593h1v1h-1zM136 575h1v1h-1zM136 556h1v1h-1zM136 537h1v1h-1zM136 518h1v1h-1zM136 499h1v1h-1zM136 480h1v1h-1zM136 462h1v1h-1zM136 443h1v1h-1zM136 424h1v1h-1zM136 405h1v1h-1zM136 386h1v1h-1zM136 368h1v1h-1zM136 349h1v1h-1zM136 330h1v1h-1zM136 311h1v1h-1zM136 292h1v1h-1zM136 274h1v1h-1zM136 255h1v1h-1zM136 236h1v1h-1zM136 217h1v1h-1zM136 198h1v1h-1zM136 179h1v1h-1zM136 161h1v1h-1zM154 725h1v1h-1zM154 706h1v1h-1zM154 687h1v1h-1zM154 669h1v1h-1zM154 650h1v1h-1zM154 631h1v1h-1zM154 612h1v1h-1zM154 593h1v1h-1zM154 575h1v1h-1zM154 556h1v1h-1zM154 537h1v1h-1zM154 518h1v1h-1zM154 499h1v1h-1zM154 480h1v1h-1zM154 462h1v1h-1zM154 443h1v1h-1zM154 424h1v1h-1zM154 405h1v1h-1zM154 386h1v1h-1zM154 368h1v1h-1zM154 349h1v1h-1zM154 330h1v1h-1zM154 311h1v1h-1zM154 292h1v1h-1zM154 274h1v1h-1zM154 255h1v1h-1zM154 236h1v1h-1zM154 217h1v1h-1zM154 198h1v1h-1zM154 179h1v1h-1zM154 161h1v1h-1zM173 725h1v1h-1zM173 706h1v1h-1zM173 687h1v1h-1zM173 669h1v1h-1zM173 650h1v1h-1zM173 631h1v1h-1zM173 612h1v1h-1zM173 593h1v1h-1zM173 575h1v1h-1zM173 556h1v1h-1zM173 537h1v1h-1zM173 518h1v1h-1zM173 499h1v1h-1zM173 480h1v1h-1zM173 462h1v1h-1zM173 443h1v1h-1zM173 424h1v1h-1zM173 405h1v1h-1zM173 386h1v1h-1zM173 368h1v1h-1zM173 349h1v1h-1zM173 330h1v1h-1zM173 311h1v1h-1zM173 292h1v1h-1zM173 274h1v1h-1zM173 255h1v1h-1zM173 236h1v1h-1zM173 217h1v1h-1zM173 198h1v1h-1zM173 179h1v1h-1zM173 161h1v1h-1zM192 725h1v1h-1zM192 706h1v1h-1zM192 687h1v1h-1zM192 669h1v1h-1zM192 650h1v1h-1zM192 631h1v1h-1zM192 612h1v1h-1zM192 593h1v1h-1zM192 575h1v1h-1zM192 556h1v1h-1zM192 537h1v1h-1zM192 518h1v1h-1zM192 499h1v1h-1zM192 480h1v1h-1zM192 462h1v1h-1zM192 443h1v1h-1zM192 424h1v1h-1zM192 405h1v1h-1zM192 386h1v1h-1zM192 368h1v1h-1zM192 349h1v1h-1zM192 330h1v1h-1zM192 311h1v1h-1zM192 292h1v1h-1zM192 274h1v1h-1zM192 255h1v1h-1zM192 236h1v1h-1zM192 217h1v1h-1zM192 198h1v1h-1zM192 179h1v1h-1zM192 161h1v1h-1zM211 725h1v1h-1zM211 706h1v1h-1zM211 687h1v1h-1zM211 669h1v1h-1zM211 650h1v1h-1zM211 631h1v1h-1zM211 612h1v1h-1zM211 593h1v1h-1zM211 575h1v1h-1zM211 556h1v1h-1zM211 537h1v1h-1zM211 518h1v1h-1zM211 499h1v1h-1zM211 480h1v1h-1zM211 462h1v1h-1zM211 443h1v1h-1zM211 424h1v1h-1zM211 405h1v1h-1zM211 386h1v1h-1zM211 368h1v1h-1zM211 349h1v1h-1zM211 330h1v1h-1zM211 311h1v1h-1zM211 292h1v1h-1zM211 274h1v1h-1zM211 255h1v1h-1zM211 236h1v1h-1zM211 217h1v1h-1zM211 198h1v1h-1zM211 179h1v1h-1zM211 161h1v1h-1zM230 725h1v1h-1zM230 706h1v1h-1zM230 687h1v1h-1zM230 669h1v1h-1zM230 650h1v1h-1zM230 631h1v1h-1zM230 612h1v1h-1zM230 593h1v1h-1zM230 575h1v1h-1zM230 556h1v1h-1zM230 537h1v1h-1zM230 518h1v1h-1zM230 499h1v1h-1zM230 480h1v1h-1zM230 462h1v1h-1zM230 443h1v1h-1zM230 424h1v1h-1zM230 405h1v1h-1zM230 386h1v1h-1zM230 368h1v1h-1zM230 349h1v1h-1zM230 330h1v1h-1zM230 311h1v1h-1zM230 292h1v1h-1zM230 274h1v1h-1zM230 255h1v1h-1zM230 236h1v1h-1zM230 217h1v1h-1zM230 198h1v1h-1zM230 179h1v1h-1zM230 161h1v1h-1zM248 725h1v1h-1zM248 706h1v1h-1zM248 687h1v1h-1zM248 669h1v1h-1zM248 650h1v1h-1zM248 631h1v1h-1zM248 612h1v1h-1zM248 593h1v1h-1zM248 575h1v1h-1zM248 556h1v1h-1zM248 537h1v1h-1zM248 518h1v1h-1zM248 499h1v1h-1zM248 480h1v1h-1zM248 462h1v1h-1zM248 443h1v1h-1zM248 424h1v1h-1zM248 405h1v1h-1zM248 386h1v1h-1zM248 368h1v1h-1zM248 349h1v1h-1zM248 330h1v1h-1zM248 311h1v1h-1zM248 292h1v1h-1zM248 274h1v1h-1zM248 255h1v1h-1zM248 236h1v1h-1zM248 217h1v1h-1zM248 198h1v1h-1zM248 179h1v1h-1zM248 161h1v1h-1zM267 725h1v1h-1zM267 706h1v1h-1zM267 687h1v1h-1zM267 669h1v1h-1zM267 650h1v1h-1zM267 631h1v1h-1zM267 612h1v1h-1zM267 593h1v1h-1zM267 575h1v1h-1zM267 556h1v1h-1zM267 537h1v1h-1zM267 518h1v1h-1zM267 499h1v1h-1zM267 480h1v1h-1zM267 462h1v1h-1zM267 443h1v1h-1zM267 424h1v1h-1zM267 405h1v1h-1zM267 386h1v1h-1zM267 368h1v1h-1zM267 349h1v1h-1zM267 330h1v1h-1zM267 311h1v1h-1zM267 292h1v1h-1zM267 274h1v1h-1zM267 255h1v1h-1zM267 236h1v1h-1zM267 217h1v1h-1zM267 198h1v1h-1zM267 179h1v1h-1zM267 161h1v1h-1zM286 725h1v1h-1zM286 706h1v1h-1zM286 687h1v1h-1zM286 669h1v1h-1zM286 650h1v1h-1zM286 631h1v1h-1zM286 612h1v1h-1zM286 593h1v1h-1zM286 575h1v1h-1zM286 556h1v1h-1zM286 537h1v1h-1zM286 518h1v1h-1zM286 499h1v1h-1zM286 480h1v1h-1zM286 462h1v1h-1zM286 443h1v1h-1zM286 424h1v1h-1zM286 405h1v1h-1zM286 386h1v1h-1zM286 368h1v1h-1zM286 349h1v1h-1zM286 330h1v1h-1zM286 311h1v1h-1zM286 292h1v1h-1zM286 274h1v1h-1zM286 255h1v1h-1zM286 236h1v1h-1zM286 217h1v1h-1zM286 198h1v1h-1zM286 179h1v1h-1zM286 161h1v1h-1zM305 725h1v1h-1zM305 706h1v1h-1zM305 687h1v1h-1zM305 669h1v1h-1zM305 650h1v1h-1zM305 631h1v1h-1zM305 612h1v1h-1zM305 593h1v1h-1zM305 575h1v1h-1zM305 556h1v1h-1zM305 537h1v1h-1zM305 518h1v1h-1zM305 499h1v1h-1zM305 480h1v1h-1zM305 462h1v1h-1zM305 443h1v1h-1zM305 424h1v1h-1zM305 405h1v1h-1zM305 386h1v1h-1zM305 368h1v1h-1zM305 349h1v1h-1zM305 330h1v1h-1zM305 311h1v1h-1zM305 292h1v1h-1zM305 274h1v1h-1zM305 255h1v1h-1zM305 236h1v1h-1zM305 217h1v1h-1zM305 198h1v1h-1zM305 179h1v1h-1zM305 161h1v1h-1zM324 725h1v1h-1zM324 706h1v1h-1zM324 687h1v1h-1zM324 669h1v1h-1zM324 650h1v1h-1zM324 631h1v1h-1zM324 612h1v1h-1zM324 593h1v1h-1zM324 575h1v1h-1zM324 556h1v1h-1zM324 537h1v1h-1zM324 518h1v1h-1zM324 499h1v1h-1zM324 480h1v1h-1zM324 462h1v1h-1zM324 443h1v1h-1zM324 424h1v1h-1zM324 405h1v1h-1zM324 386h1v1h-1zM324 368h1v1h-1zM324 349h1v1h-1zM324 330h1v1h-1zM324 311h1v1h-1zM324 292h1v1h-1zM324 274h1v1h-1zM324 255h1v1h-1zM324 236h1v1h-1zM324 217h1v1h-1zM324 198h1v1h-1zM324 179h1v1h-1zM324 161h1v1h-1zM343 725h1v1h-1zM343 706h1v1h-1zM343 687h1v1h-1zM343 669h1v1h-1zM343 650h1v1h-1zM343 631h1v1h-1zM343 612h1v1h-1zM343 593h1v1h-1zM343 575h1v1h-1zM343 556h1v1h-1zM343 537h1v1h-1zM343 518h1v1h-1zM343 499h1v1h-1zM343 480h1v1h-1zM343 462h1v1h-1zM343 443h1v1h-1zM343 424h1v1h-1zM343 405h1v1h-1zM343 386h1v1h-1zM343 368h1v1h-1zM343 349h1v1h-1zM343 330h1v1h-1zM343 311h1v1h-1zM343 292h1v1h-1zM343 274h1v1h-1zM343 255h1v1h-1zM343 236h1v1h-1zM343 217h1v1h-1zM343 198h1v1h-1zM343 179h1v1h-1zM343 161h1v1h-1zM361 725h1v1h-1zM361 706h1v1h-1zM361 687h1v1h-1zM361 669h1v1h-1zM361 650h1v1h-1zM361 631h1v1h-1zM361 612h1v1h-1zM361 593h1v1h-1zM361 575h1v1h-1zM361 556h1v1h-1zM361 537h1v1h-1zM361 518h1v1h-1zM361 499h1v1h-1zM361 480h1v1h-1zM361 462h1v1h-1zM361 443h1v1h-1zM361 424h1v1h-1zM361 405h1v1h-1zM361 386h1v1h-1zM361 368h1v1h-1zM361 349h1v1h-1zM361 330h1v1h-1zM361 311h1v1h-1zM361 292h1v1h-1zM361 274h1v1h-1zM361 255h1v1h-1zM361 236h1v1h-1zM361 217h1v1h-1zM361 198h1v1h-1zM361 179h1v1h-1zM361 161h1v1h-1zM380 725h1v1h-1zM380 706h1v1h-1zM380 687h1v1h-1zM380 669h1v1h-1zM380 650h1v1h-1zM380 631h1v1h-1zM380 612h1v1h-1zM380 593h1v1h-1zM380 575h1v1h-1zM380 556h1v1h-1zM380 537h1v1h-1zM380 518h1v1h-1zM380 499h1v1h-1zM380 480h1v1h-1zM380 462h1v1h-1zM380 443h1v1h-1zM380 424h1v1h-1zM380 405h1v1h-1zM380 386h1v1h-1zM380 368h1v1h-1zM380 349h1v1h-1zM380 330h1v1h-1zM380 311h1v1h-1zM380 292h1v1h-1zM380 274h1v1h-1zM380 255h1v1h-1zM380 236h1v1h-1zM380 217h1v1h-1zM380 198h1v1h-1zM380 179h1v1h-1zM380 161h1v1h-1zM399 725h1v1h-1zM399 706h1v1h-1zM399 687h1v1h-1zM399 669h1v1h-1zM399 650h1v1h-1zM399 631h1v1h-1zM399 612h1v1h-1zM399 593h1v1h-1zM399 575h1v1h-1zM399 556h1v1h-1zM399 537h1v1h-1zM399 518h1v1h-1zM399 499h1v1h-1zM399 480h1v1h-1zM399 462h1v1h-1zM399 443h1v1h-1zM399 424h1v1h-1zM399 405h1v1h-1zM399 386h1v1h-1zM399 368h1v1h-1zM399 349h1v1h-1zM399 330h1v1h-1zM399 311h1v1h-1zM399 292h1v1h-1zM399 274h1v1h-1zM399 255h1v1h-1zM399 236h1v1h-1zM399 217h1v1h-1zM399 198h1v1h-1zM399 179h1v1h-1zM399 161h1v1h-1zM418 725h1v1h-1zM418 706h1v1h-1zM418 687h1v1h-1zM418 669h1v1h-1zM418 650h1v1h-1zM418 631h1v1h-1zM418 612h1v1h-1zM418 593h1v1h-1zM418 575h1v1h-1zM418 556h1v1h-1zM418 537h1v1h-1zM418 518h1v1h-1zM418 499h1v1h-1zM418 480h1v1h-1zM418 462h1v1h-1zM418 443h1v1h-1zM418 424h1v1h-1zM418 405h1v1h-1zM418 386h1v1h-1zM418 368h1v1h-1zM418 349h1v1h-1zM418 330h1v1h-1zM418 311h1v1h-1zM418 292h1v1h-1zM418 274h1v1h-1zM418 255h1v1h-1zM418 236h1v1h-1zM418 217h1v1h-1zM418 198h1v1h-1zM418 179h1v1h-1zM418 161h1v1h-1zM437 725h1v1h-1zM437 706h1v1h-1zM437 687h1v1h-1zM437 669h1v1h-1zM437 650h1v1h-1zM437 631h1v1h-1zM437 612h1v1h-1zM437 593h1v1h-1zM437 575h1v1h-1zM437 556h1v1h-1zM437 537h1v1h-1zM437 518h1v1h-1zM437 499h1v1h-1zM437 480h1v1h-1zM437 462h1v1h-1zM437 443h1v1h-1zM437 424h1v1h-1zM437 405h1v1h-1zM437 386h1v1h-1zM437 368h1v1h-1zM437 349h1v1h-1zM437 330h1v1h-1zM437 311h1v1h-1zM437 292h1v1h-1zM437 274h1v1h-1zM437 255h1v1h-1zM437 236h1v1h-1zM437 217h1v1h-1zM437 198h1v1h-1zM437 179h1v1h-1zM437 161h1v1h-1zM455 725h1v1h-1zM455 706h1v1h-1zM455 687h1v1h-1zM455 669h1v1h-1zM455 650h1v1h-1zM455 631h1v1h-1zM455 612h1v1h-1zM455 593h1v1h-1zM455 575h1v1h-1zM455 556h1v1h-1zM455 537h1v1h-1zM455 518h1v1h-1zM455 499h1v1h-1zM455 480h1v1h-1zM455 462h1v1h-1zM455 443h1v1h-1zM455 424h1v1h-1zM455 405h1v1h-1zM455 386h1v1h-1zM455 368h1v1h-1zM455 349h1v1h-1zM455 330h1v1h-1zM455 311h1v1h-1zM455 292h1v1h-1zM455 274h1v1h-1zM455 255h1v1h-1zM455 236h1v1h-1zM455 217h1v1h-1zM455 198h1v1h-1zM455 179h1v1h-1zM455 161h1v1h-1zM474 725h1v1h-1zM474 706h1v1h-1zM474 687h1v1h-1zM474 669h1v1h-1zM474 650h1v1h-1zM474 631h1v1h-1zM474 612h1v1h-1zM474 593h1v1h-1zM474 575h1v1h-1zM474 556h1v1h-1zM474 537h1v1h-1zM474 518h1v1h-1zM474 499h1v1h-1zM474 480h1v1h-1zM474 462h1v1h-1zM474 443h1v1h-1zM474 424h1v1h-1zM474 405h1v1h-1zM474 386h1v1h-1zM474 368h1v1h-1zM474 349h1v1h-1zM474 330h1v1h-1zM474 311h1v1h-1zM474 292h1v1h-1zM474 274h1v1h-1zM474 255h1v1h-1zM474 236h1v1h-1zM474 217h1v1h-1zM474 198h1v1h-1zM474 179h1v1h-1zM474 161h1v1h-1zM493 725h1v1h-1zM493 706h1v1h-1zM493 687h1v1h-1zM493 669h1v1h-1zM493 650h1v1h-1zM493 631h1v1h-1zM493 612h1v1h-1zM493 593h1v1h-1zM493 575h1v1h-1zM493 556h1v1h-1zM493 537h1v1h-1zM493 518h1v1h-1zM493 499h1v1h-1zM493 480h1v1h-1zM493 462h1v1h-1zM493 443h1v1h-1zM493 424h1v1h-1zM493 405h1v1h-1zM493 386h1v1h-1zM493 368h1v1h-1zM493 349h1v1h-1zM493 330h1v1h-1zM493 311h1v1h-1zM493 292h1v1h-1zM493 274h1v1h-1zM493 255h1v1h-1zM493 236h1v1h-1zM493 217h1v1h-1zM493 198h1v1h-1zM493 179h1v1h-1zM493 161h1v1h-1zM512 725h1v1h-1zM512 706h1v1h-1zM512 687h1v1h-1zM512 669h1v1h-1zM512 650h1v1h-1zM512 631h1v1h-1zM512 612h1v1h-1zM512 593h1v1h-1zM512 575h1v1h-1zM512 556h1v1h-1zM512 537h1v1h-1zM512 518h1v1h-1zM512 499h1v1h-1zM512 480h1v1h-1zM512 462h1v1h-1zM512 443h1v1h-1zM512 424h1v1h-1zM512 405h1v1h-1zM512 386h1v1h-1zM512 368h1v1h-1zM512 349h1v1h-1zM512 330h1v1h-1zM512 311h1v1h-1zM512 292h1v1h-1zM512 274h1v1h-1zM512 255h1v1h-1zM512 236h1v1h-1zM512 217h1v1h-1zM512 198h1v1h-1zM512 179h1v1h-1zM512 161h1v1h-1zM531 725h1v1h-1zM531 706h1v1h-1zM531 687h1v1h-1zM531 669h1v1h-1zM531 650h1v1h-1zM531 631h1v1h-1zM531 612h1v1h-1zM531 593h1v1h-1zM531 575h1v1h-1zM531 556h1v1h-1zM531 537h1v1h-1zM531 518h1v1h-1zM531 499h1v1h-1zM531 480h1v1h-1zM531 462h1v1h-1zM531 443h1v1h-1zM531 424h1v1h-1zM531 405h1v1h-1zM531 386h1v1h-1zM531 368h1v1h-1zM531 349h1v1h-1zM531 330h1v1h-1zM531 311h1v1h-1zM531 292h1v1h-1zM531 274h1v1h-1zM531 255h1v1h-1zM531 236h1v1h-1zM531 217h1v1h-1zM531 198h1v1h-1zM531 179h1v1h-1zM531 161h1v1h-1zM550 725h1v1h-1zM550 706h1v1h-1zM550 687h1v1h-1zM550 669h1v1h-1zM550 650h1v1h-1zM550 631h1v1h-1zM550 612h1v1h-1zM550 593h1v1h-1zM550 575h1v1h-1zM550 556h1v1h-1zM550 537h1v1h-1zM550 518h1v1h-1zM550 499h1v1h-1zM550 480h1v1h-1zM550 462h1v1h-1zM550 443h1v1h-1zM550 424h1v1h-1zM550 405h1v1h-1zM550 386h1v1h-1zM550 368h1v1h-1zM550 349h1v1h-1zM550 330h1v1h-1zM550 311h1v1h-1zM550 292h1v1h-1zM550 274h1v1h-1zM550 255h1v1h-1zM550 236h1v1h-1zM550 217h1v1h-1zM550 198h1v1h-1zM550 179h1v1h-1zM550 161h1v1h-1zM568 725h1v1h-1zM568 706h1v1h-1zM568 687h1v1h-1zM568 669h1v1h-1zM568 650h1v1h-1zM568 631h1v1h-1zM568 612h1v1h-1zM568 593h1v1h-1zM568 575h1v1h-1zM568 556h1v1h-1zM568 537h1v1h-1zM568 518h1v1h-1zM568 499h1v1h-1zM568 480h1v1h-1zM568 462h1v1h-1zM568 443h1v1h-1zM568 424h1v1h-1zM568 405h1v1h-1zM568 386h1v1h-1zM568 368h1v1h-1zM568 349h1v1h-1zM568 330h1v1h-1zM568 311h1v1h-1zM568 292h1v1h-1zM568 274h1v1h-1zM568 255h1v1h-1zM568 236h1v1h-1zM568 217h1v1h-1zM568 198h1v1h-1zM568 179h1v1h-1zM568 161h1v1h-1zM587 725h1v1h-1zM587 706h1v1h-1zM587 687h1v1h-1zM587 669h1v1h-1zM587 650h1v1h-1zM587 631h1v1h-1zM587 612h1v1h-1zM587 593h1v1h-1zM587 575h1v1h-1zM587 556h1v1h-1zM587 537h1v1h-1zM587 518h1v1h-1zM587 499h1v1h-1zM587 480h1v1h-1zM587 462h1v1h-1zM587 443h1v1h-1zM587 424h1v1h-1zM587 405h1v1h-1zM587 386h1v1h-1zM587 368h1v1h-1zM587 349h1v1h-1zM587 330h1v1h-1zM587 311h1v1h-1zM587 292h1v1h-1zM587 274h1v1h-1zM587 255h1v1h-1zM587 236h1v1h-1zM587 217h1v1h-1zM587 198h1v1h-1zM587 179h1v1h-1zM587 161h1v1h-1zM606 725h1v1h-1zM606 706h1v1h-1zM606 687h1v1h-1zM606 669h1v1h-1zM606 650h1v1h-1zM606 631h1v1h-1zM606 612h1v1h-1zM606 593h1v1h-1zM606 575h1v1h-1zM606 556h1v1h-1zM606 537h1v1h-1zM606 518h1v1h-1zM606 499h1v1h-1zM606 480h1v1h-1zM606 462h1v1h-1zM606 443h1v1h-1zM606 424h1v1h-1zM606 405h1v1h-1zM606 386h1v1h-1zM606 368h1v1h-1zM606 349h1v1h-1zM606 330h1v1h-1zM606 311h1v1h-1zM606 292h1v1h-1zM606 274h1v1h-1zM606 255h1v1h-1zM606 236h1v1h-1zM606 217h1v1h-1zM606 198h1v1h-1zM606 179h1v1h-1zM606 161h1v1h-1zM625 725h1v1h-1zM625 706h1v1h-1zM625 687h1v1h-1zM625 669h1v1h-1zM625 650h1v1h-1zM625 631h1v1h-1zM625 612h1v1h-1zM625 593h1v1h-1zM625 575h1v1h-1zM625 556h1v1h-1zM625 537h1v1h-1zM625 518h1v1h-1zM625 499h1v1h-1zM625 480h1v1h-1zM625 462h1v1h-1zM625 443h1v1h-1zM625 424h1v1h-1zM625 405h1v1h-1zM625 386h1v1h-1zM625 368h1v1h-1zM625 349h1v1h-1zM625 330h1v1h-1zM625 311h1v1h-1zM625 292h1v1h-1zM625 274h1v1h-1zM625 255h1v1h-1zM625 236h1v1h-1zM625 217h1v1h-1zM625 198h1v1h-1zM625 179h1v1h-1zM625 161h1v1h-1zM644 725h1v1h-1zM644 706h1v1h-1zM644 687h1v1h-1zM644 669h1v1h-1zM644 650h1v1h-1zM644 631h1v1h-1zM644 612h1v1h-1zM644 593h1v1h-1zM644 575h1v1h-1zM644 556h1v1h-1zM644 537h1v1h-1zM644 518h1v1h-1zM644 499h1v1h-1zM644 480h1v1h-1zM644 462h1v1h-1zM644 443h1v1h-1zM644 424h1v1h-1zM644 405h1v1h-1zM644 386h1v1h-1zM644 368h1v1h-1zM644 349h1v1h-1zM644 330h1v1h-1zM644 311h1v1h-1zM644 292h1v1h-1zM644 274h1v1h-1zM644 255h1v1h-1zM644 236h1v1h-1zM644 217h1v1h-1zM644 198h1v1h-1zM644 179h1v1h-1zM644 161h1v1h-1zM662 725h1v1h-1zM662 706h1v1h-1zM662 687h1v1h-1zM662 669h1v1h-1zM662 650h1v1h-1zM662 631h1v1h-1zM662 612h1v1h-1zM662 593h1v1h-1zM662 575h1v1h-1zM662 556h1v1h-1zM662 537h1v1h-1zM662 518h1v1h-1zM662 499h1v1h-1zM662 480h1v1h-1zM662 462h1v1h-1zM662 443h1v1h-1zM662 424h1v1h-1zM662 405h1v1h-1zM662 386h1v1h-1zM662 368h1v1h-1zM662 349h1v1h-1zM662 330h1v1h-1zM662 311h1v1h-1zM662 292h1v1h-1zM662 274h1v1h-1zM662 255h1v1h-1zM662 236h1v1h-1zM662 217h1v1h-1zM662 198h1v1h-1zM662 179h1v1h-1zM662 161h1v1h-1zM681 725h1v1h-1zM681 706h1v1h-1zM681 687h1v1h-1zM681 669h1v1h-1zM681 650h1v1h-1zM681 631h1v1h-1zM681 612h1v1h-1zM681 593h1v1h-1zM681 575h1v1h-1zM681 556h1v1h-1zM681 537h1v1h-1zM681 518h1v1h-1zM681 499h1v1h-1zM681 480h1v1h-1zM681 462h1v1h-1zM681 443h1v1h-1zM681 424h1v1h-1zM681 405h1v1h-1zM681 386h1v1h-1zM681 368h1v1h-1zM681 349h1v1h-1zM681 330h1v1h-1zM681 311h1v1h-1zM681 292h1v1h-1zM681 274h1v1h-1zM681 255h1v1h-1zM681 236h1v1h-1zM681 217h1v1h-1zM681 198h1v1h-1zM681 179h1v1h-1zM681 161h1v1h-1zM700 725h1v1h-1zM700 706h1v1h-1zM700 687h1v1h-1zM700 669h1v1h-1zM700 650h1v1h-1zM700 631h1v1h-1zM700 612h1v1h-1zM700 593h1v1h-1zM700 575h1v1h-1zM700 556h1v1h-1zM700 537h1v1h-1zM700 518h1v1h-1zM700 499h1v1h-1zM700 480h1v1h-1zM700 462h1v1h-1zM700 443h1v1h-1zM700 424h1v1h-1zM700 405h1v1h-1zM700 386h1v1h-1zM700 368h1v1h-1zM700 349h1v1h-1zM700 330h1v1h-1zM700 311h1v1h-1zM700 292h1v1h-1zM700 274h1v1h-1zM700 255h1v1h-1zM700 236h1v1h-1zM700 217h1v1h-1zM700 198h1v1h-1zM700 179h1v1h-1zM700 161h1v1h-1zM719 725h1v1h-1zM719 706h1v1h-1zM719 687h1v1h-1zM719 669h1v1h-1zM719 650h1v1h-1zM719 631h1v1h-1zM719 612h1v1h-1zM719 593h1v1h-1zM719 575h1v1h-1zM719 556h1v1h-1zM719 537h1v1h-1zM719 518h1v1h-1zM719 499h1v1h-1zM719 480h1v1h-1zM719 462h1v1h-1zM719 443h1v1h-1zM719 424h1v1h-1zM719 405h1v1h-1zM719 386h1v1h-1zM719 368h1v1h-1zM719 349h1v1h-1zM719 330h1v1h-1zM719 311h1v1h-1zM719 292h1v1h-1zM719 274h1v1h-1zM719 255h1v1h-1zM719 236h1v1h-1zM719 217h1v1h-1zM719 198h1v1h-1zM719 179h1v1h-1zM719 161h1v1h-1zM738 725h1v1h-1zM738 706h1v1h-1zM738 687h1v1h-1zM738 669h1v1h-1zM738 650h1v1h-1zM738 631h1v1h-1zM738 612h1v1h-1zM738 593h1v1h-1zM738 575h1v1h-1zM738 556h1v1h-1zM738 537h1v1h-1zM738 518h1v1h-1zM738 499h1v1h-1zM738 480h1v1h-1zM738 462h1v1h-1zM738 443h1v1h-1zM738 424h1v1h-1zM738 405h1v1h-1zM738 386h1v1h-1zM738 368h1v1h-1zM738 349h1v1h-1zM738 330h1v1h-1zM738 311h1v1h-1zM738 292h1v1h-1zM738 274h1v1h-1zM738 255h1v1h-1zM738 236h1v1h-1zM738 217h1v1h-1zM738 198h1v1h-1zM738 179h1v1h-1zM738 161h1v1h-1zM756 725h1v1h-1zM756 706h1v1h-1zM756 687h1v1h-1zM756 669h1v1h-1zM756 650h1v1h-1zM756 631h1v1h-1zM756 612h1v1h-1zM756 593h1v1h-1zM756 575h1v1h-1zM756 556h1v1h-1zM756 537h1v1h-1zM756 518h1v1h-1zM756 499h1v1h-1zM756 480h1v1h-1zM756 462h1v1h-1zM756 443h1v1h-1zM756 424h1v1h-1zM756 405h1v1h-1zM756 386h1v1h-1zM756 368h1v1h-1zM756 349h1v1h-1zM756 330h1v1h-1zM756 311h1v1h-1zM756 292h1v1h-1zM756 274h1v1h-1zM756 255h1v1h-1zM756 236h1v1h-1zM756 217h1v1h-1zM756 198h1v1h-1zM756 179h1v1h-1zM756 161h1v1h-1zM775 725h1v1h-1zM775 706h1v1h-1zM775 687h1v1h-1zM775 669h1v1h-1zM775 650h1v1h-1zM775 631h1v1h-1zM775 612h1v1h-1zM775 593h1v1h-1zM775 575h1v1h-1zM775 556h1v1h-1zM775 537h1v1h-1zM775 518h1v1h-1zM775 499h1v1h-1zM775 480h1v1h-1zM775 462h1v1h-1zM775 443h1v1h-1zM775 424h1v1h-1zM775 405h1v1h-1zM775 386h1v1h-1zM775 368h1v1h-1zM775 349h1v1h-1zM775 330h1v1h-1zM775 311h1v1h-1zM775 292h1v1h-1zM775 274h1v1h-1zM775 255h1v1h-1zM775 236h1v1h-1zM775 217h1v1h-1zM775 198h1v1h-1zM775 179h1v1h-1zM775 161h1v1h-1zM794 725h1v1h-1zM794 706h1v1h-1zM794 687h1v1h-1zM794 669h1v1h-1zM794 650h1v1h-1zM794 631h1v1h-1zM794 612h1v1h-1zM794 593h1v1h-1zM794 575h1v1h-1zM794 556h1v1h-1zM794 537h1v1h-1zM794 518h1v1h-1zM794 499h1v1h-1zM794 480h1v1h-1zM794 462h1v1h-1zM794 443h1v1h-1zM794 424h1v1h-1zM794 405h1v1h-1zM794 386h1v1h-1zM794 368h1v1h-1zM794 349h1v1h-1zM794 330h1v1h-1zM794 311h1v1h-1zM794 292h1v1h-1zM794 274h1v1h-1zM794 255h1v1h-1zM794 236h1v1h-1zM794 217h1v1h-1zM794 198h1v1h-1zM794 179h1v1h-1zM794 161h1v1h-1zM813 725h1v1h-1zM813 706h1v1h-1zM813 687h1v1h-1zM813 669h1v1h-1zM813 650h1v1h-1zM813 631h1v1h-1zM813 612h1v1h-1zM813 593h1v1h-1zM813 575h1v1h-1zM813 556h1v1h-1zM813 537h1v1h-1zM813 518h1v1h-1zM813 499h1v1h-1zM813 480h1v1h-1zM813 462h1v1h-1zM813 443h1v1h-1zM813 424h1v1h-1zM813 405h1v1h-1zM813 386h1v1h-1zM813 368h1v1h-1zM813 349h1v1h-1zM813 330h1v1h-1zM813 311h1v1h-1zM813 292h1v1h-1zM813 274h1v1h-1zM813 255h1v1h-1zM813 236h1v1h-1zM813 217h1v1h-1zM813 198h1v1h-1zM813 179h1v1h-1zM813 161h1v1h-1zM832 725h1v1h-1zM832 706h1v1h-1zM832 687h1v1h-1zM832 669h1v1h-1zM832 650h1v1h-1zM832 631h1v1h-1zM832 612h1v1h-1zM832 593h1v1h-1zM832 575h1v1h-1zM832 556h1v1h-1zM832 537h1v1h-1zM832 518h1v1h-1zM832 499h1v1h-1zM832 480h1v1h-1zM832 462h1v1h-1zM832 443h1v1h-1zM832 424h1v1h-1zM832 405h1v1h-1zM832 386h1v1h-1zM832 368h1v1h-1zM832 349h1v1h-1zM832 330h1v1h-1zM832 311h1v1h-1zM832 292h1v1h-1zM832 274h1v1h-1zM832 255h1v1h-1zM832 236h1v1h-1zM832 217h1v1h-1zM832 198h1v1h-1zM832 179h1v1h-1zM832 161h1v1h-1zM851 725h1v1h-1zM851 706h1v1h-1zM851 687h1v1h-1zM851 669h1v1h-1zM851 650h1v1h-1zM851 631h1v1h-1zM851 612h1v1h-1zM851 593h1v1h-1zM851 575h1v1h-1zM851 556h1v1h-1zM851 537h1v1h-1zM851 518h1v1h-1zM851 499h1v1h-1zM851 480h1v1h-1zM851 462h1v1h-1zM851 443h1v1h-1zM851 424h1v1h-1zM851 405h1v1h-1zM851 386h1v1h-1zM851 368h1v1h-1zM851 349h1v1h-1zM851 330h1v1h-1zM851 311h1v1h-1zM851 292h1v1h-1zM851 274h1v1h-1zM851 255h1v1h-1zM851 236h1v1h-1zM851 217h1v1h-1zM851 198h1v1h-1zM851 179h1v1h-1zM851 161h1v1h-1zM869 725h1v1h-1zM869 706h1v1h-1zM869 687h1v1h-1zM869 669h1v1h-1zM869 650h1v1h-1zM869 631h1v1h-1zM869 612h1v1h-1zM869 593h1v1h-1zM869 575h1v1h-1zM869 556h1v1h-1zM869 537h1v1h-1zM869 518h1v1h-1zM869 499h1v1h-1zM869 480h1v1h-1zM869 462h1v1h-1zM869 443h1v1h-1zM869 424h1v1h-1zM869 405h1v1h-1zM869 386h1v1h-1zM869 368h1v1h-1zM869 349h1v1h-1zM869 330h1v1h-1zM869 311h1v1h-1zM869 292h1v1h-1zM869 274h1v1h-1zM869 255h1v1h-1zM869 236h1v1h-1zM869 217h1v1h-1zM869 198h1v1h-1zM869 179h1v1h-1zM869 161h1v1h-1zM888 725h1v1h-1zM888 706h1v1h-1zM888 687h1v1h-1zM888 669h1v1h-1zM888 650h1v1h-1zM888 631h1v1h-1zM888 612h1v1h-1zM888 593h1v1h-1zM888 575h1v1h-1zM888 556h1v1h-1zM888 537h1v1h-1zM888 518h1v1h-1zM888 499h1v1h-1zM888 480h1v1h-1zM888 462h1v1h-1zM888 443h1v1h-1zM888 424h1v1h-1zM888 405h1v1h-1zM888 386h1v1h-1zM888 368h1v1h-1zM888 349h1v1h-1zM888 330h1v1h-1zM888 311h1v1h-1zM888 292h1v1h-1zM888 274h1v1h-1zM888 255h1v1h-1zM888 236h1v1h-1zM888 217h1v1h-1zM888 198h1v1h-1zM888 179h1v1h-1zM888 161h1v1h-1zM907 725h1v1h-1zM907 706h1v1h-1zM907 687h1v1h-1zM907 669h1v1h-1zM907 650h1v1h-1zM907 631h1v1h-1zM907 612h1v1h-1zM907 593h1v1h-1zM907 575h1v1h-1zM907 556h1v1h-1zM907 537h1v1h-1zM907 518h1v1h-1zM907 499h1v1h-1zM907 480h1v1h-1zM907 462h1v1h-1zM907 443h1v1h-1zM907 424h1v1h-1zM907 405h1v1h-1zM907 386h1v1h-1zM907 368h1v1h-1zM907 349h1v1h-1zM907 330h1v1h-1zM907 311h1v1h-1zM907 292h1v1h-1zM907 274h1v1h-1zM907 255h1v1h-1zM907 236h1v1h-1zM907 217h1v1h-1zM907 198h1v1h-1zM907 179h1v1h-1zM907 161h1v1h-1zM926 725h1v1h-1zM926 706h1v1h-1zM926 687h1v1h-1zM926 669h1v1h-1zM926 650h1v1h-1zM926 631h1v1h-1zM926 612h1v1h-1zM926 593h1v1h-1zM926 575h1v1h-1zM926 556h1v1h-1zM926 537h1v1h-1zM926 518h1v1h-1zM926 499h1v1h-1zM926 480h1v1h-1zM926 462h1v1h-1zM926 443h1v1h-1zM926 424h1v1h-1zM926 405h1v1h-1zM926 386h1v1h-1zM926 368h1v1h-1zM926 349h1v1h-1zM926 330h1v1h-1zM926 311h1v1h-1zM926 292h1v1h-1zM926 274h1v1h-1zM926 255h1v1h-1zM926 236h1v1h-1zM926 217h1v1h-1zM926 198h1v1h-1zM926 179h1v1h-1zM926 161h1v1h-1zM945 725h1v1h-1zM945 706h1v1h-1zM945 687h1v1h-1zM945 669h1v1h-1zM945 650h1v1h-1zM945 631h1v1h-1zM945 612h1v1h-1zM945 593h1v1h-1zM945 575h1v1h-1zM945 556h1v1h-1zM945 537h1v1h-1zM945 518h1v1h-1zM945 499h1v1h-1zM945 480h1v1h-1zM945 462h1v1h-1zM945 443h1v1h-1zM945 424h1v1h-1zM945 405h1v1h-1zM945 386h1v1h-1zM945 368h1v1h-1zM945 349h1v1h-1zM945 330h1v1h-1zM945 311h1v1h-1zM945 292h1v1h-1zM945 274h1v1h-1zM945 255h1v1h-1zM945 236h1v1h-1zM945 217h1v1h-1zM945 198h1v1h-1zM945 179h1v1h-1zM945 161h1v1h-1zM963 725h1v1h-1zM963 706h1v1h-1zM963 687h1v1h-1zM963 669h1v1h-1zM963 650h1v1h-1zM963 631h1v1h-1zM963 612h1v1h-1zM963 593h1v1h-1zM963 575h1v1h-1zM963 556h1v1h-1zM963 537h1v1h-1zM963 518h1v1h-1zM963 499h1v1h-1zM963 480h1v1h-1zM963 462h1v1h-1zM963 443h1v1h-1zM963 424h1v1h-1zM963 405h1v1h-1zM963 386h1v1h-1zM963 368h1v1h-1zM963 349h1v1h-1zM963 330h1v1h-1zM963 311h1v1h-1zM963 292h1v1h-1zM963 274h1v1h-1zM963 255h1v1h-1zM963 236h1v1h-1zM963 217h1v1h-1zM963 198h1v1h-1zM963 179h1v1h-1zM963 161h1v1h-1zM982 725h1v1h-1zM982 706h1v1h-1zM982 687h1v1h-1zM982 669h1v1h-1zM982 650h1v1h-1zM982 631h1v1h-1zM982 612h1v1h-1zM982 593h1v1h-1zM982 575h1v1h-1zM982 556h1v1h-1zM982 537h1v1h-1zM982 518h1v1h-1zM982 499h1v1h-1zM982 480h1v1h-1zM982 462h1v1h-1zM982 443h1v1h-1zM982 424h1v1h-1zM982 405h1v1h-1zM982 386h1v1h-1zM982 368h1v1h-1zM982 349h1v1h-1zM982 330h1v1h-1zM982 311h1v1h-1zM982 292h1v1h-1zM982 274h1v1h-1zM982 255h1v1h-1zM982 236h1v1h-1zM982 217h1v1h-1zM982 198h1v1h-1zM982 179h1v1h-1zM982 161h1v1h-1zM1001 725h1v1h-1zM1001 706h1v1h-1zM1001 687h1v1h-1zM1001 669h1v1h-1zM1001 650h1v1h-1zM1001 631h1v1h-1zM1001 612h1v1h-1zM1001 593h1v1h-1zM1001 575h1v1h-1zM1001 556h1v1h-1zM1001 537h1v1h-1zM1001 518h1v1h-1zM1001 499h1v1h-1zM1001 480h1v1h-1zM1001 462h1v1h-1zM1001 443h1v1h-1zM1001 424h1v1h-1zM1001 405h1v1h-1zM1001 386h1v1h-1zM1001 368h1v1h-1zM1001 349h1v1h-1zM1001 330h1v1h-1zM1001 311h1v1h-1zM1001 292h1v1h-1zM1001 274h1v1h-1zM1001 255h1v1h-1zM1001 236h1v1h-1zM1001 217h1v1h-1zM1001 198h1v1h-1zM1001 179h1v1h-1zM1001 161h1v1h-1zM1020 725h1v1h-1zM1020 706h1v1h-1zM1020 687h1v1h-1zM1020 669h1v1h-1zM1020 650h1v1h-1zM1020 631h1v1h-1zM1020 612h1v1h-1zM1020 593h1v1h-1zM1020 575h1v1h-1zM1020 556h1v1h-1zM1020 537h1v1h-1zM1020 518h1v1h-1zM1020 499h1v1h-1zM1020 480h1v1h-1zM1020 462h1v1h-1zM1020 443h1v1h-1zM1020 424h1v1h-1zM1020 405h1v1h-1zM1020 386h1v1h-1zM1020 368h1v1h-1zM1020 349h1v1h-1zM1020 330h1v1h-1zM1020 311h1v1h-1zM1020 292h1v1h-1zM1020 274h1v1h-1zM1020 255h1v1h-1zM1020 236h1v1h-1zM1020 217h1v1h-1zM1020 198h1v1h-1zM1020 179h1v1h-1zM1020 161h1v1h-1zM1039 725h1v1h-1zM1039 706h1v1h-1zM1039 687h1v1h-1zM1039 669h1v1h-1zM1039 650h1v1h-1zM1039 631h1v1h-1zM1039 612h1v1h-1zM1039 593h1v1h-1zM1039 575h1v1h-1zM1039 556h1v1h-1zM1039 537h1v1h-1zM1039 518h1v1h-1zM1039 499h1v1h-1zM1039 480h1v1h-1zM1039 462h1v1h-1zM1039 443h1v1h-1zM1039 424h1v1h-1zM1039 405h1v1h-1zM1039 386h1v1h-1zM1039 368h1v1h-1zM1039 349h1v1h-1zM1039 330h1v1h-1zM1039 311h1v1h-1zM1039 292h1v1h-1zM1039 274h1v1h-1zM1039 255h1v1h-1zM1039 236h1v1h-1zM1039 217h1v1h-1zM1039 198h1v1h-1zM1039 179h1v1h-1zM1039 161h1v1h-1zM1058 725h1v1h-1zM1058 706h1v1h-1zM1058 687h1v1h-1zM1058 669h1v1h-1zM1058 650h1v1h-1zM1058 631h1v1h-1zM1058 612h1v1h-1zM1058 593h1v1h-1zM1058 575h1v1h-1zM1058 556h1v1h-1zM1058 537h1v1h-1zM1058 518h1v1h-1zM1058 499h1v1h-1zM1058 480h1v1h-1zM1058 462h1v1h-1zM1058 443h1v1h-1zM1058 424h1v1h-1zM1058 405h1v1h-1zM1058 386h1v1h-1zM1058 368h1v1h-1zM1058 349h1v1h-1zM1058 330h1v1h-1zM1058 311h1v1h-1zM1058 292h1v1h-1zM1058 274h1v1h-1zM1058 255h1v1h-1zM1058 236h1v1h-1zM1058 217h1v1h-1zM1058 198h1v1h-1zM1058 179h1v1h-1zM1058 161h1v1h-1zM1076 725h1v1h-1zM1076 706h1v1h-1zM1076 687h1v1h-1zM1076 669h1v1h-1zM1076 650h1v1h-1zM1076 631h1v1h-1zM1076 612h1v1h-1zM1076 593h1v1h-1zM1076 575h1v1h-1zM1076 556h1v1h-1zM1076 537h1v1h-1zM1076 518h1v1h-1zM1076 499h1v1h-1zM1076 480h1v1h-1zM1076 462h1v1h-1zM1076 443h1v1h-1zM1076 424h1v1h-1zM1076 405h1v1h-1zM1076 386h1v1h-1zM1076 368h1v1h-1zM1076 349h1v1h-1zM1076 330h1v1h-1zM1076 311h1v1h-1zM1076 292h1v1h-1zM1076 274h1v1h-1zM1076 255h1v1h-1zM1076 236h1v1h-1zM1076 217h1v1h-1zM1076 198h1v1h-1zM1076 179h1v1h-1zM1076 161h1v1h-1zM1095 725h1v1h-1zM1095 706h1v1h-1zM1095 687h1v1h-1zM1095 669h1v1h-1zM1095 650h1v1h-1zM1095 631h1v1h-1zM1095 612h1v1h-1zM1095 593h1v1h-1zM1095 575h1v1h-1zM1095 556h1v1h-1zM1095 537h1v1h-1zM1095 518h1v1h-1zM1095 499h1v1h-1zM1095 480h1v1h-1zM1095 462h1v1h-1zM1095 443h1v1h-1zM1095 424h1v1h-1zM1095 405h1v1h-1zM1095 386h1v1h-1zM1095 368h1v1h-1zM1095 349h1v1h-1zM1095 330h1v1h-1zM1095 311h1v1h-1zM1095 292h1v1h-1zM1095 274h1v1h-1zM1095 255h1v1h-1zM1095 236h1v1h-1zM1095 217h1v1h-1zM1095 198h1v1h-1zM1095 179h1v1h-1zM1095 161h1v1h-1zM1114 725h1v1h-1zM1114 706h1v1h-1zM1114 687h1v1h-1zM1114 669h1v1h-1zM1114 650h1v1h-1zM1114 631h1v1h-1zM1114 612h1v1h-1zM1114 593h1v1h-1zM1114 575h1v1h-1zM1114 556h1v1h-1zM1114 537h1v1h-1zM1114 518h1v1h-1zM1114 499h1v1h-1zM1114 480h1v1h-1zM1114 462h1v1h-1zM1114 443h1v1h-1zM1114 424h1v1h-1zM1114 405h1v1h-1zM1114 386h1v1h-1zM1114 368h1v1h-1zM1114 349h1v1h-1zM1114 330h1v1h-1zM1114 311h1v1h-1zM1114 292h1v1h-1zM1114 274h1v1h-1zM1114 255h1v1h-1zM1114 236h1v1h-1zM1114 217h1v1h-1zM1114 198h1v1h-1zM1114 179h1v1h-1zM1114 161h1v1h-1z"/>
<g stroke="#a80000" stroke-width="1" fill="none"><path d="M398.5 631.5h40M418.5 611.5v40"/><circle cx="418.5" cy="631.5" r="5"/></g>
<g stroke="#c8c8c8" stroke-width="1" fill="none"><circle cx="606.5" cy="443.4" r="188.2"/><circle cx="606.5" cy="443.4" r="169.3"/></g>
<g fill="none" stroke="#6a2a2a" stroke-width="1"><circle cx="606.5" cy="443.4" r="158"/><circle cx="606.5" cy="443.4" r="147"/></g>
<g font-family="Liberation Serif" font-size="33" fill="#773434" text-anchor="middle"><text transform="translate(667.5 349.0) scale(0.88 1)" x="0" y="0">1</text><text transform="translate(712.1 393.7) scale(0.88 1)" x="0" y="0">2</text><text transform="translate(728.5 454.7) scale(0.88 1)" x="0" y="0">3</text><text transform="translate(712.1 515.6) scale(0.88 1)" x="0" y="0">4</text><text transform="translate(667.5 560.3) scale(0.88 1)" x="0" y="0">5</text><text transform="translate(606.5 576.6) scale(0.88 1)" x="0" y="0">6</text><text transform="translate(545.5 560.3) scale(0.88 1)" x="0" y="0">7</text><text transform="translate(500.8 515.7) scale(0.88 1)" x="0" y="0">8</text><text transform="translate(484.5 454.7) scale(0.88 1)" x="0" y="0">9</text><text transform="translate(500.8 393.7) scale(0.88 1)" x="0" y="0">10</text><text transform="translate(545.5 349.0) scale(0.88 1)" x="0" y="0">11</text><text transform="translate(606.5 332.7) scale(0.88 1)" x="0" y="0">12</text></g>
<g fill="#c8102e" stroke="#9c9cb4" stroke-width="0.7"><rect x="616.8" y="292.2" width="10.0" height="10.0"/><rect x="632.0" y="294.6" width="10.0" height="10.0"/><rect x="646.9" y="298.5" width="10.0" height="10.0"/><rect x="661.2" y="304.1" width="10.0" height="10.0"/><rect x="687.9" y="319.4" width="10.0" height="10.0"/><rect x="699.8" y="329.1" width="10.0" height="10.0"/><rect x="710.7" y="340.0" width="10.0" height="10.0"/><rect x="720.4" y="351.9" width="10.0" height="10.0"/><rect x="735.7" y="378.6" width="10.0" height="10.0"/><rect x="741.3" y="392.9" width="10.0" height="10.0"/><rect x="745.2" y="407.8" width="10.0" height="10.0"/><rect x="747.6" y="423.0" width="10.0" height="10.0"/><rect x="747.6" y="453.7" width="10.0" height="10.0"/><rect x="745.2" y="468.9" width="10.0" height="10.0"/><rect x="741.3" y="483.8" width="10.0" height="10.0"/><rect x="735.7" y="498.1" width="10.0" height="10.0"/><rect x="720.4" y="524.8" width="10.0" height="10.0"/><rect x="710.7" y="536.7" width="10.0" height="10.0"/><rect x="699.8" y="547.6" width="10.0" height="10.0"/><rect x="687.9" y="557.3" width="10.0" height="10.0"/><rect x="661.2" y="572.6" width="10.0" height="10.0"/><rect x="646.9" y="578.2" width="10.0" height="10.0"/><rect x="632.0" y="582.1" width="10.0" height="10.0"/><rect x="616.8" y="584.5" width="10.0" height="10.0"/><rect x="586.1" y="584.5" width="10.0" height="10.0"/><rect x="570.9" y="582.1" width="10.0" height="10.0"/><rect x="556.0" y="578.2" width="10.0" height="10.0"/><rect x="541.7" y="572.6" width="10.0" height="10.0"/><rect x="515.0" y="557.3" width="10.0" height="10.0"/><rect x="503.1" y="547.6" width="10.0" height="10.0"/><rect x="492.2" y="536.7" width="10.0" height="10.0"/><rect x="482.5" y="524.8" width="10.0" height="10.0"/><rect x="467.2" y="498.1" width="10.0" height="10.0"/><rect x="461.6" y="483.8" width="10.0" height="10.0"/><rect x="457.7" y="468.9" width="10.0" height="10.0"/><rect x="455.3" y="453.7" width="10.0" height="10.0"/><rect x="455.3" y="423.0" width="10.0" height="10.0"/><rect x="457.7" y="407.8" width="10.0" height="10.0"/><rect x="461.6" y="392.9" width="10.0" height="10.0"/><rect x="467.2" y="378.6" width="10.0" height="10.0"/><rect x="482.5" y="351.9" width="10.0" height="10.0"/><rect x="492.2" y="340.0" width="10.0" height="10.0"/><rect x="503.1" y="329.1" width="10.0" height="10.0"/><rect x="515.0" y="319.4" width="10.0" height="10.0"/><rect x="541.7" y="304.1" width="10.0" height="10.0"/><rect x="556.0" y="298.5" width="10.0" height="10.0"/><rect x="570.9" y="294.6" width="10.0" height="10.0"/><rect x="586.1" y="292.2" width="10.0" height="10.0"/></g>
<g fill="#0000a8" stroke="#9c9cb4" stroke-width="0.7"><rect x="601.5" y="275.9" width="10.0" height="10.0"/><rect x="601.5" y="295.9" width="10.0" height="10.0"/><rect x="605.7" y="285.9" width="10.0" height="10.0"/><rect x="597.2" y="285.9" width="10.0" height="10.0"/><rect x="618.0" y="281.2" width="10.0" height="10.0"/><rect x="634.3" y="283.8" width="10.0" height="10.0"/><rect x="650.3" y="288.1" width="10.0" height="10.0"/><rect x="665.7" y="294.0" width="10.0" height="10.0"/><rect x="682.7" y="297.6" width="10.0" height="10.0"/><rect x="672.7" y="314.9" width="10.0" height="10.0"/><rect x="681.3" y="308.4" width="10.0" height="10.0"/><rect x="674.1" y="304.2" width="10.0" height="10.0"/><rect x="694.3" y="310.5" width="10.0" height="10.0"/><rect x="707.2" y="320.9" width="10.0" height="10.0"/><rect x="718.9" y="332.6" width="10.0" height="10.0"/><rect x="729.3" y="345.5" width="10.0" height="10.0"/><rect x="742.2" y="357.1" width="10.0" height="10.0"/><rect x="724.9" y="367.1" width="10.0" height="10.0"/><rect x="735.6" y="365.7" width="10.0" height="10.0"/><rect x="731.4" y="358.5" width="10.0" height="10.0"/><rect x="745.8" y="374.1" width="10.0" height="10.0"/><rect x="751.7" y="389.5" width="10.0" height="10.0"/><rect x="756.0" y="405.5" width="10.0" height="10.0"/><rect x="758.6" y="421.8" width="10.0" height="10.0"/><rect x="764.0" y="438.4" width="10.0" height="10.0"/><rect x="744.0" y="438.4" width="10.0" height="10.0"/><rect x="754.0" y="442.6" width="10.0" height="10.0"/><rect x="754.0" y="434.2" width="10.0" height="10.0"/><rect x="758.6" y="454.9" width="10.0" height="10.0"/><rect x="756.0" y="471.2" width="10.0" height="10.0"/><rect x="751.7" y="487.2" width="10.0" height="10.0"/><rect x="745.8" y="502.6" width="10.0" height="10.0"/><rect x="742.2" y="519.6" width="10.0" height="10.0"/><rect x="724.9" y="509.6" width="10.0" height="10.0"/><rect x="731.4" y="518.2" width="10.0" height="10.0"/><rect x="735.6" y="511.0" width="10.0" height="10.0"/><rect x="729.3" y="531.2" width="10.0" height="10.0"/><rect x="718.9" y="544.1" width="10.0" height="10.0"/><rect x="707.2" y="555.8" width="10.0" height="10.0"/><rect x="694.3" y="566.2" width="10.0" height="10.0"/><rect x="682.7" y="579.1" width="10.0" height="10.0"/><rect x="672.7" y="561.8" width="10.0" height="10.0"/><rect x="674.1" y="572.5" width="10.0" height="10.0"/><rect x="681.3" y="568.3" width="10.0" height="10.0"/><rect x="665.7" y="582.7" width="10.0" height="10.0"/><rect x="650.3" y="588.6" width="10.0" height="10.0"/><rect x="634.3" y="592.9" width="10.0" height="10.0"/><rect x="618.0" y="595.5" width="10.0" height="10.0"/><rect x="601.5" y="600.9" width="10.0" height="10.0"/><rect x="601.5" y="580.9" width="10.0" height="10.0"/><rect x="597.2" y="590.9" width="10.0" height="10.0"/><rect x="605.7" y="590.9" width="10.0" height="10.0"/><rect x="584.9" y="595.5" width="10.0" height="10.0"/><rect x="568.6" y="592.9" width="10.0" height="10.0"/><rect x="552.6" y="588.6" width="10.0" height="10.0"/><rect x="537.2" y="582.7" width="10.0" height="10.0"/><rect x="520.2" y="579.1" width="10.0" height="10.0"/><rect x="530.2" y="561.8" width="10.0" height="10.0"/><rect x="521.6" y="568.3" width="10.0" height="10.0"/><rect x="528.8" y="572.5" width="10.0" height="10.0"/><rect x="508.6" y="566.2" width="10.0" height="10.0"/><rect x="495.7" y="555.8" width="10.0" height="10.0"/><rect x="484.0" y="544.1" width="10.0" height="10.0"/><rect x="473.6" y="531.2" width="10.0" height="10.0"/><rect x="460.7" y="519.6" width="10.0" height="10.0"/><rect x="478.0" y="509.6" width="10.0" height="10.0"/><rect x="467.3" y="511.0" width="10.0" height="10.0"/><rect x="471.5" y="518.2" width="10.0" height="10.0"/><rect x="457.1" y="502.6" width="10.0" height="10.0"/><rect x="451.2" y="487.2" width="10.0" height="10.0"/><rect x="446.9" y="471.2" width="10.0" height="10.0"/><rect x="444.3" y="454.9" width="10.0" height="10.0"/><rect x="439.0" y="438.4" width="10.0" height="10.0"/><rect x="459.0" y="438.4" width="10.0" height="10.0"/><rect x="449.0" y="434.2" width="10.0" height="10.0"/><rect x="449.0" y="442.6" width="10.0" height="10.0"/><rect x="444.3" y="421.8" width="10.0" height="10.0"/><rect x="446.9" y="405.5" width="10.0" height="10.0"/><rect x="451.2" y="389.5" width="10.0" height="10.0"/><rect x="457.1" y="374.1" width="10.0" height="10.0"/><rect x="460.7" y="357.1" width="10.0" height="10.0"/><rect x="478.0" y="367.1" width="10.0" height="10.0"/><rect x="471.5" y="358.5" width="10.0" height="10.0"/><rect x="467.3" y="365.7" width="10.0" height="10.0"/><rect x="473.6" y="345.5" width="10.0" height="10.0"/><rect x="484.0" y="332.6" width="10.0" height="10.0"/><rect x="495.7" y="320.9" width="10.0" height="10.0"/><rect x="508.6" y="310.5" width="10.0" height="10.0"/><rect x="520.2" y="297.6" width="10.0" height="10.0"/><rect x="530.2" y="314.9" width="10.0" height="10.0"/><rect x="528.8" y="304.2" width="10.0" height="10.0"/><rect x="521.6" y="308.4" width="10.0" height="10.0"/><rect x="537.2" y="294.0" width="10.0" height="10.0"/><rect x="552.6" y="288.1" width="10.0" height="10.0"/><rect x="568.6" y="283.8" width="10.0" height="10.0"/><rect x="584.9" y="281.2" width="10.0" height="10.0"/></g>
<g fill="#c8102e" stroke="#9c9cb4" stroke-width="0.7"><rect x="601.5" y="382.4" width="10.0" height="10.0"/><rect x="607.3" y="382.7" width="10.0" height="10.0"/><rect x="613.1" y="383.6" width="10.0" height="10.0"/><rect x="618.8" y="385.1" width="10.0" height="10.0"/><rect x="624.2" y="387.2" width="10.0" height="10.0"/><rect x="629.5" y="389.9" width="10.0" height="10.0"/><rect x="634.4" y="393.0" width="10.0" height="10.0"/><rect x="638.9" y="396.7" width="10.0" height="10.0"/><rect x="643.1" y="400.9" width="10.0" height="10.0"/><rect x="646.8" y="405.4" width="10.0" height="10.0"/><rect x="649.9" y="410.4" width="10.0" height="10.0"/><rect x="652.6" y="415.6" width="10.0" height="10.0"/><rect x="654.7" y="421.0" width="10.0" height="10.0"/><rect x="656.2" y="426.7" width="10.0" height="10.0"/><rect x="657.1" y="432.5" width="10.0" height="10.0"/><rect x="657.5" y="438.4" width="10.0" height="10.0"/><rect x="657.1" y="444.2" width="10.0" height="10.0"/><rect x="656.2" y="450.0" width="10.0" height="10.0"/><rect x="654.7" y="455.7" width="10.0" height="10.0"/><rect x="652.6" y="461.1" width="10.0" height="10.0"/><rect x="649.9" y="466.4" width="10.0" height="10.0"/><rect x="646.8" y="471.3" width="10.0" height="10.0"/><rect x="643.1" y="475.8" width="10.0" height="10.0"/><rect x="638.9" y="480.0" width="10.0" height="10.0"/><rect x="634.4" y="483.7" width="10.0" height="10.0"/><rect x="629.5" y="486.8" width="10.0" height="10.0"/><rect x="624.2" y="489.5" width="10.0" height="10.0"/><rect x="618.8" y="491.6" width="10.0" height="10.0"/><rect x="613.1" y="493.1" width="10.0" height="10.0"/><rect x="607.3" y="494.0" width="10.0" height="10.0"/><rect x="601.5" y="494.4" width="10.0" height="10.0"/><rect x="595.6" y="494.0" width="10.0" height="10.0"/><rect x="589.8" y="493.1" width="10.0" height="10.0"/><rect x="584.1" y="491.6" width="10.0" height="10.0"/><rect x="578.7" y="489.5" width="10.0" height="10.0"/><rect x="573.5" y="486.8" width="10.0" height="10.0"/><rect x="568.5" y="483.7" width="10.0" height="10.0"/><rect x="564.0" y="480.0" width="10.0" height="10.0"/><rect x="559.8" y="475.8" width="10.0" height="10.0"/><rect x="556.1" y="471.3" width="10.0" height="10.0"/><rect x="553.0" y="466.4" width="10.0" height="10.0"/><rect x="550.3" y="461.1" width="10.0" height="10.0"/><rect x="548.2" y="455.7" width="10.0" height="10.0"/><rect x="546.7" y="450.0" width="10.0" height="10.0"/><rect x="545.8" y="444.2" width="10.0" height="10.0"/><rect x="545.5" y="438.4" width="10.0" height="10.0"/><rect x="545.8" y="432.5" width="10.0" height="10.0"/><rect x="546.7" y="426.7" width="10.0" height="10.0"/><rect x="548.2" y="421.0" width="10.0" height="10.0"/><rect x="550.3" y="415.6" width="10.0" height="10.0"/><rect x="553.0" y="410.4" width="10.0" height="10.0"/><rect x="556.1" y="405.4" width="10.0" height="10.0"/><rect x="559.8" y="400.9" width="10.0" height="10.0"/><rect x="564.0" y="396.7" width="10.0" height="10.0"/><rect x="568.5" y="393.0" width="10.0" height="10.0"/><rect x="573.5" y="389.9" width="10.0" height="10.0"/><rect x="578.7" y="387.2" width="10.0" height="10.0"/><rect x="584.1" y="385.1" width="10.0" height="10.0"/><rect x="589.8" y="383.6" width="10.0" height="10.0"/><rect x="595.6" y="382.7" width="10.0" height="10.0"/></g>
<g fill="#0000a8" stroke="#9c9cb4" stroke-width="0.7"><rect x="601.5" y="370.9" width="10.0" height="10.0"/><rect x="608.5" y="371.2" width="10.0" height="10.0"/><rect x="615.5" y="372.3" width="10.0" height="10.0"/><rect x="622.3" y="374.2" width="10.0" height="10.0"/><rect x="628.9" y="376.7" width="10.0" height="10.0"/><rect x="635.2" y="379.9" width="10.0" height="10.0"/><rect x="641.1" y="383.7" width="10.0" height="10.0"/><rect x="646.6" y="388.2" width="10.0" height="10.0"/><rect x="651.6" y="393.2" width="10.0" height="10.0"/><rect x="656.1" y="398.7" width="10.0" height="10.0"/><rect x="659.9" y="404.6" width="10.0" height="10.0"/><rect x="663.1" y="410.9" width="10.0" height="10.0"/><rect x="665.6" y="417.5" width="10.0" height="10.0"/><rect x="667.5" y="424.3" width="10.0" height="10.0"/><rect x="668.6" y="431.3" width="10.0" height="10.0"/><rect x="669.0" y="438.4" width="10.0" height="10.0"/><rect x="668.6" y="445.4" width="10.0" height="10.0"/><rect x="667.5" y="452.4" width="10.0" height="10.0"/><rect x="665.6" y="459.2" width="10.0" height="10.0"/><rect x="663.1" y="465.8" width="10.0" height="10.0"/><rect x="659.9" y="472.1" width="10.0" height="10.0"/><rect x="656.1" y="478.0" width="10.0" height="10.0"/><rect x="651.6" y="483.5" width="10.0" height="10.0"/><rect x="646.6" y="488.5" width="10.0" height="10.0"/><rect x="641.1" y="493.0" width="10.0" height="10.0"/><rect x="635.2" y="496.8" width="10.0" height="10.0"/><rect x="628.9" y="500.0" width="10.0" height="10.0"/><rect x="622.3" y="502.5" width="10.0" height="10.0"/><rect x="615.5" y="504.4" width="10.0" height="10.0"/><rect x="608.5" y="505.5" width="10.0" height="10.0"/><rect x="601.5" y="505.9" width="10.0" height="10.0"/><rect x="594.4" y="505.5" width="10.0" height="10.0"/><rect x="587.4" y="504.4" width="10.0" height="10.0"/><rect x="580.6" y="502.5" width="10.0" height="10.0"/><rect x="574.0" y="500.0" width="10.0" height="10.0"/><rect x="567.7" y="496.8" width="10.0" height="10.0"/><rect x="561.8" y="493.0" width="10.0" height="10.0"/><rect x="556.3" y="488.5" width="10.0" height="10.0"/><rect x="551.3" y="483.5" width="10.0" height="10.0"/><rect x="546.8" y="478.0" width="10.0" height="10.0"/><rect x="543.0" y="472.1" width="10.0" height="10.0"/><rect x="539.8" y="465.8" width="10.0" height="10.0"/><rect x="537.3" y="459.2" width="10.0" height="10.0"/><rect x="535.4" y="452.4" width="10.0" height="10.0"/><rect x="534.3" y="445.4" width="10.0" height="10.0"/><rect x="534.0" y="438.4" width="10.0" height="10.0"/><rect x="534.3" y="431.3" width="10.0" height="10.0"/><rect x="535.4" y="424.3" width="10.0" height="10.0"/><rect x="537.3" y="417.5" width="10.0" height="10.0"/><rect x="539.8" y="410.9" width="10.0" height="10.0"/><rect x="543.0" y="404.6" width="10.0" height="10.0"/><rect x="546.8" y="398.7" width="10.0" height="10.0"/><rect x="551.3" y="393.2" width="10.0" height="10.0"/><rect x="556.3" y="388.2" width="10.0" height="10.0"/><rect x="561.8" y="383.7" width="10.0" height="10.0"/><rect x="567.7" y="379.9" width="10.0" height="10.0"/><rect x="574.0" y="376.7" width="10.0" height="10.0"/><rect x="580.6" y="374.2" width="10.0" height="10.0"/><rect x="587.4" y="372.3" width="10.0" height="10.0"/><rect x="594.4" y="371.2" width="10.0" height="10.0"/></g>
<g fill="#0000a8" stroke="#9c9cb4" stroke-width="0.7"><rect x="662.5" y="332.7" width="10.0" height="10.0"/><rect x="707.1" y="377.4" width="10.0" height="10.0"/><rect x="723.5" y="438.4" width="10.0" height="10.0"/><rect x="707.1" y="499.4" width="10.0" height="10.0"/><rect x="662.5" y="544.0" width="10.0" height="10.0"/><rect x="601.5" y="560.4" width="10.0" height="10.0"/><rect x="540.5" y="544.0" width="10.0" height="10.0"/><rect x="495.8" y="499.4" width="10.0" height="10.0"/><rect x="479.5" y="438.4" width="10.0" height="10.0"/><rect x="495.8" y="377.4" width="10.0" height="10.0"/><rect x="540.5" y="332.7" width="10.0" height="10.0"/><rect x="601.5" y="316.4" width="10.0" height="10.0"/></g>
<path fill="#1a8fbf" stroke="#5aa8c8" stroke-width="0.6" d="M601.7 433.6h9.5v9.5h-9.5zM596.7 438.6h9.5v9.5h-9.5zM606.7 438.6h9.5v9.5h-9.5zM601.7 443.6h9.5v9.5h-9.5z"/>
</svg>
<div id="vscroll" class="abs"></div>
<div class="abs" style="left:1123px;top:303px;width:8px;height:280px;background:#000;border-radius:4px"></div>
<div id="hscroll" class="abs"></div>
<div class="abs" style="left:161px;top:737px;width:836px;height:8px;background:#7f7f7f;border-radius:4px"></div>
<div class="abs" style="left:1063px;top:732px;width:70px;height:15px;background:#ebebeb"></div>
<div class="t" style="left:1082px;top:734px;font-size:13px;color:#111">10 &lt; 100</div>
<div id="cmdhist" class="abs"></div>
<div class="t" style="left:77px;top:752px;font-size:13px;color:#1010d0"><i>Kommando:</i> line</div>
<div id="cmdrow" class="abs"></div>
<div class="t" style="left:73px;top:779px;font-size:13px;color:#111">Kommando:</div>
<div class="abs" style="left:148px;top:776px;width:959px;height:18px;background:#fff"></div>
<div class="abs" style="left:1107px;top:773px;width:26px;height:25px;background:linear-gradient(#f6f6f6,#e6e6e6);border:1px solid #b8b8b8"></div>
<div class="abs" style="left:1113px;top:780px;width:14px;height:10px;border:1px solid #222;border-top:3px solid #111"></div>
<div id="docktabs" class="abs"></div>
<div class="abs" style="left:1155px;top:107px;width:300px;height:25px;background:linear-gradient(#e8e8e8,#dadada);border-bottom:1px solid #c6c6c6;border-left:1px solid #d0d0d0"></div>
<svg class="abs" style="left:1156px;top:110px" width="34" height="17" viewBox="0 0 34 17"><circle cx="7.9" cy="7.9" r="6.9" fill="#5e5e5e"/><path d="M5.2 5.2l5.4 5.4M10.6 5.2l-5.4 5.4" stroke="#fff" stroke-width="1.9" stroke-linecap="round"/><circle cx="26" cy="7.9" r="6.9" fill="#5e5e5e"/><rect x="22.6" y="9" width="5.4" height="3.2" fill="none" stroke="#fff" stroke-width="1.2"/><path d="M25.4 8.6V5.4h4.3v4.2h-1.6" fill="none" stroke="#fff" stroke-width="1.2"/></svg>
<div class="t" style="left:1322.0px;top:113.0px;width:0;font-size:12px;color:#2a2a2a"><span style="position:absolute;transform:translateX(-50%)">Eigenschafteneditor</span></div>
<div class="abs" style="left:1155px;top:132px;width:300px;height:666px;background:#ececec;border-left:1px solid #d4d4d4"></div>
<div class="t" style="left:1168.5px;top:148.0px;font-size:13.3px;">Auswahl:</div>
<div class="abs" style="left:1230.4px;top:143.5px;width:210.6px;height:21.0px;background:#fff;border:1px solid #cdd3da;border-radius:6px;box-shadow:0 .5px .5px rgba(0,0,0,.05)"></div><svg class="abs" style="left:1422.8px;top:146.0px" width="16" height="16" viewBox="0 0 16 16"><rect width="16" height="16" rx="4" fill="#157ef8"/><path d="M5 6.3 8 3.6 11 6.3M5 9.7 8 12.4 11 9.7" stroke="#fff" stroke-width="1.5" fill="none" stroke-linecap="round" stroke-linejoin="round"/></svg><div class="t" style="left:1234.6px;top:148.0px;font-size:13.3px;">Text [12]</div>
<div class="t" style="left:1175.3px;top:171.2px;font-size:12px;color:#222">Allgemeine Eigenschaften</div>
<div class="abs" style="left:1168px;top:183px;width:273.5px;height:185px;background:#e3e3e3;border:1px solid #dcdcdc;border-radius:7px"></div>
<div class="t" style="right:203.0px;top:200.0px;font-size:13.3px;color:#141414">Layer:</div>
<div class="abs" style="left:1299.7px;top:195.7px;width:104.5px;height:20.6px;background:#fff;border:1px solid #cdd3da;border-radius:6px;box-shadow:0 .5px .5px rgba(0,0,0,.05)"></div><svg class="abs" style="left:1386.0px;top:198.0px" width="16" height="16" viewBox="0 0 16 16"><rect width="16" height="16" rx="4" fill="#157ef8"/><path d="M5 6.3 8 3.6 11 6.3M5 9.7 8 12.4 11 9.7" stroke="#fff" stroke-width="1.5" fill="none" stroke-linecap="round" stroke-linejoin="round"/></svg><div class="abs" style="left:1303.2px;top:200.5px;width:16px;height:11px;border:1.2px solid #222"></div><div class="t" style="left:1324.7px;top:200.0px;font-size:13.3px;">0</div>
<div class="abs" style="left:1407px;top:193.3px;width:26px;height:25.2px;background:linear-gradient(#f7f7f7,#ececec);border:1px solid #b9b9b9"></div>
<svg class="abs" style="left:1407px;top:193.3px" width="26" height="25" viewBox="0 0 26 25"><path d="M6.5 7.6h13M6.5 12.4h13M6.5 17.2h13" stroke="#7a7a7a" stroke-width="1.6"/></svg>
<div class="t" style="right:203.0px;top:226.0px;font-size:13.3px;color:#141414">Farbe:</div>
<div class="abs" style="left:1299.7px;top:221.7px;width:132.5px;height:20.7px;background:#fff;border:1px solid #cdd3da;border-radius:6px;box-shadow:0 .5px .5px rgba(0,0,0,.05)"></div><svg class="abs" style="left:1414.0px;top:224.1px" width="16" height="16" viewBox="0 0 16 16"><rect width="16" height="16" rx="4" fill="#157ef8"/><path d="M5 6.3 8 3.6 11 6.3M5 9.7 8 12.4 11 9.7" stroke="#fff" stroke-width="1.5" fill="none" stroke-linecap="round" stroke-linejoin="round"/></svg><div class="abs" style="left:1303.2px;top:226.6px;width:16px;height:11px;border:1.2px solid #222"></div><div class="t" style="left:1324.7px;top:226.0px;font-size:13.3px;">Von Layer</div>
<div class="t" style="right:203.0px;top:249.9px;font-size:13.3px;color:#141414">Linienbreite:</div>
<div class="abs" style="left:1299.7px;top:245.8px;width:132.5px;height:20.3px;background:#fff;border:1px solid #cdd3da;border-radius:6px;box-shadow:0 .5px .5px rgba(0,0,0,.05)"></div><svg class="abs" style="left:1414.0px;top:248.0px" width="16" height="16" viewBox="0 0 16 16"><rect width="16" height="16" rx="4" fill="#157ef8"/><path d="M5 6.3 8 3.6 11 6.3M5 9.7 8 12.4 11 9.7" stroke="#fff" stroke-width="1.5" fill="none" stroke-linecap="round" stroke-linejoin="round"/></svg><div class="abs" style="left:1303.2px;top:255.5px;width:16px;height:1.3px;background:#222"></div><div class="t" style="left:1324.7px;top:249.9px;font-size:13.3px;">Von Layer</div>
<div class="t" style="right:203.0px;top:274.1px;font-size:13.3px;color:#141414">Linientyp:</div>
<div class="abs" style="left:1299.7px;top:270.0px;width:132.5px;height:20.3px;background:#fff;border:1px solid #cdd3da;border-radius:6px;box-shadow:0 .5px .5px rgba(0,0,0,.05)"></div><svg class="abs" style="left:1414.0px;top:272.1px" width="16" height="16" viewBox="0 0 16 16"><rect width="16" height="16" rx="4" fill="#157ef8"/><path d="M5 6.3 8 3.6 11 6.3M5 9.7 8 12.4 11 9.7" stroke="#fff" stroke-width="1.5" fill="none" stroke-linecap="round" stroke-linejoin="round"/></svg><div class="t" style="left:1303.5px;top:272.7px;font-size:13.3px;">Von Layer</div>
<div class="t" style="right:203.0px;top:297.6px;font-size:13.3px;color:#141414">Linientypskalierung:</div>
<div class="abs" style="left:1299.7px;top:293.8px;width:132.5px;height:19.7px;background:#fff;border-top:1px solid #e6e6e6;border-bottom:1px solid #bdbdbd"></div><div class="t" style="left:1301.5px;top:297.6px;font-size:13.3px;color:#1d1d1d">1</div>
<div class="t" style="right:203.0px;top:320.6px;font-size:13.3px;color:#141414">Reihenfolge:</div>
<div class="abs" style="left:1299.7px;top:317.0px;width:132.5px;height:19.3px;background:#fff;border-top:1px solid #e6e6e6;border-bottom:1px solid #bdbdbd"></div><div class="t" style="left:1301.5px;top:320.6px;font-size:13.3px;color:#1d1d1d">*VARIIERT*</div>
<div class="t" style="right:203.0px;top:343.7px;font-size:13.3px;color:#141414">Handle:</div>
<div class="abs" style="left:1299.7px;top:340.0px;width:132.5px;height:19.5px;background:#fff;border-top:1px solid #e6e6e6;border-bottom:1px solid #bdbdbd"></div><div class="t" style="left:1301.5px;top:343.7px;font-size:13.3px;color:#b4b4b4">*VARIIERT*</div>
<div class="t" style="left:1175.5px;top:375.4px;font-size:12px;color:#222">Spezifische Eigenschaften</div>
<div class="abs" style="left:1168px;top:387.3px;width:273.5px;height:403.5px;background:#e3e3e3;border:1px solid #dcdcdc;border-radius:7px"></div>
<div class="t" style="right:235.0px;top:401.9px;font-size:13.3px;color:#141414">Einfach:</div>
<div class="abs" style="left:1267.7px;top:397.7px;width:164.5px;height:20.5px;background:#fff;border:1px solid #cdd3da;border-radius:6px;box-shadow:0 .5px .5px rgba(0,0,0,.05)"></div><svg class="abs" style="left:1414.0px;top:399.9px" width="16" height="16" viewBox="0 0 16 16"><rect width="16" height="16" rx="4" fill="#157ef8"/><path d="M5 6.3 8 3.6 11 6.3M5 9.7 8 12.4 11 9.7" stroke="#fff" stroke-width="1.5" fill="none" stroke-linecap="round" stroke-linejoin="round"/></svg><div class="t" style="left:1271.2px;top:401.9px;font-size:13.3px;">Nein</div>
<div class="t" style="right:235.0px;top:425.5px;font-size:13.3px;color:#141414">Text:</div>
<div class="abs" style="left:1267.7px;top:421.8px;width:164.5px;height:19.5px;background:#fff;border-top:1px solid #e6e6e6;border-bottom:1px solid #bdbdbd"></div><div class="t" style="left:1269.5px;top:425.5px;font-size:13.3px;color:#1d1d1d">*VARIIERT*</div>
<div class="t" style="right:235.0px;top:448.6px;font-size:13.3px;color:#141414">Klartext:</div>
<div class="abs" style="left:1267.7px;top:444.8px;width:164.5px;height:19.7px;background:#fff;border-top:1px solid #e6e6e6;border-bottom:1px solid #bdbdbd"></div><div class="t" style="left:1269.5px;top:448.6px;font-size:13.3px;color:#b4b4b4">*VARIIERT*</div>
<div class="t" style="right:235.0px;top:472.3px;font-size:13.3px;color:#141414">Schriftart:</div>
<div class="abs" style="left:1267.7px;top:468.0px;width:164.5px;height:20.7px;background:#fdd9d9;border:1px solid #e6c4c4;border-radius:6px;box-shadow:0 .5px .5px rgba(0,0,0,.05)"></div><svg class="abs" style="left:1414.0px;top:470.4px" width="16" height="16" viewBox="0 0 16 16"><rect width="16" height="16" rx="4" fill="#2c6bd8"/><path d="M5 6.3 8 3.6 11 6.3M5 9.7 8 12.4 11 9.7" stroke="#fff" stroke-width="1.5" fill="none" stroke-linecap="round" stroke-linejoin="round"/></svg><div class="t" style="left:1271.2px;top:472.3px;font-size:13.3px;">Times New Roman</div>
<div class="t" style="right:235.0px;top:495.4px;font-size:13.3px;color:#141414">Texthöhe:</div>
<div class="abs" style="left:1267.7px;top:491.7px;width:164.5px;height:19.5px;background:#fff;border-top:1px solid #e6e6e6;border-bottom:1px solid #bdbdbd"></div><div class="t" style="left:1269.5px;top:495.4px;font-size:13.3px;color:#1d1d1d">12</div>
<div class="t" style="right:235.0px;top:518.6px;font-size:13.3px;color:#141414">Textbreite:</div>
<div class="abs" style="left:1267.7px;top:514.8px;width:164.5px;height:19.6px;background:#fff;border-top:1px solid #e6e6e6;border-bottom:1px solid #bdbdbd"></div><div class="t" style="left:1269.5px;top:518.6px;font-size:13.3px;color:#1d1d1d">0</div>
<div class="t" style="right:235.0px;top:541.7px;font-size:13.3px;color:#141414">Textwinkel:</div>
<div class="abs" style="left:1267.7px;top:538.0px;width:164.5px;height:19.5px;background:#fff;border-top:1px solid #e6e6e6;border-bottom:1px solid #bdbdbd"></div><div class="t" style="left:1269.5px;top:541.7px;font-size:13.3px;color:#1d1d1d">0</div>
<div class="t" style="right:235.0px;top:564.6px;font-size:13.3px;color:#141414">X Skalierung:</div>
<div class="abs" style="left:1267.7px;top:560.8px;width:164.5px;height:19.7px;background:#fff;border-top:1px solid #e6e6e6;border-bottom:1px solid #bdbdbd"></div><div class="t" style="left:1269.5px;top:564.6px;font-size:13.3px;color:#1d1d1d">1</div>
<div class="t" style="right:235.0px;top:588.1px;font-size:13.3px;color:#141414">Fett:</div>
<div class="abs" style="left:1267.7px;top:584.0px;width:164.5px;height:20.3px;background:#fff;border:1px solid #cdd3da;border-radius:6px;box-shadow:0 .5px .5px rgba(0,0,0,.05)"></div><svg class="abs" style="left:1414.0px;top:586.1px" width="16" height="16" viewBox="0 0 16 16"><rect width="16" height="16" rx="4" fill="#157ef8"/><path d="M5 6.3 8 3.6 11 6.3M5 9.7 8 12.4 11 9.7" stroke="#fff" stroke-width="1.5" fill="none" stroke-linecap="round" stroke-linejoin="round"/></svg><div class="t" style="left:1271.2px;top:588.1px;font-size:13.3px;">Nein</div>
<div class="t" style="right:235.0px;top:612.0px;font-size:13.3px;color:#141414">Kursiv:</div>
<div class="abs" style="left:1267.7px;top:608.0px;width:164.5px;height:20.0px;background:#fff;border:1px solid #cdd3da;border-radius:6px;box-shadow:0 .5px .5px rgba(0,0,0,.05)"></div><svg class="abs" style="left:1414.0px;top:610.0px" width="16" height="16" viewBox="0 0 16 16"><rect width="16" height="16" rx="4" fill="#157ef8"/><path d="M5 6.3 8 3.6 11 6.3M5 9.7 8 12.4 11 9.7" stroke="#fff" stroke-width="1.5" fill="none" stroke-linecap="round" stroke-linejoin="round"/></svg><div class="t" style="left:1271.2px;top:612.0px;font-size:13.3px;">Nein</div>
<div class="t" style="right:235.0px;top:635.8px;font-size:13.3px;color:#141414">Linienabstand:</div>
<div class="abs" style="left:1267.7px;top:632.0px;width:164.5px;height:19.7px;background:#fff;border-top:1px solid #e6e6e6;border-bottom:1px solid #bdbdbd"></div><div class="t" style="left:1269.5px;top:635.8px;font-size:13.3px;color:#1d1d1d">1</div>
<div class="t" style="right:235.0px;top:676.3px;font-size:13.3px;color:#141414">X:</div>
<div class="abs" style="left:1267.7px;top:672.6px;width:164.5px;height:19.4px;background:#fff;border-top:1px solid #e6e6e6;border-bottom:1px solid #bdbdbd"></div><div class="t" style="left:1269.5px;top:676.3px;font-size:13.3px;color:#1d1d1d">*VARIIERT*</div>
<div class="t" style="right:235.0px;top:699.5px;font-size:13.3px;color:#141414">Y:</div>
<div class="abs" style="left:1267.7px;top:695.8px;width:164.5px;height:19.4px;background:#fff;border-top:1px solid #e6e6e6;border-bottom:1px solid #bdbdbd"></div><div class="t" style="left:1269.5px;top:699.5px;font-size:13.3px;color:#1d1d1d">*VARIIERT*</div>
<div class="t" style="right:235.0px;top:740.8px;font-size:13.3px;color:#141414">Horizontal:</div>
<div class="abs" style="left:1267.7px;top:736.4px;width:164.5px;height:20.9px;background:#fff;border:1px solid #cdd3da;border-radius:6px;box-shadow:0 .5px .5px rgba(0,0,0,.05)"></div><svg class="abs" style="left:1414.0px;top:738.8px" width="16" height="16" viewBox="0 0 16 16"><rect width="16" height="16" rx="4" fill="#157ef8"/><path d="M5 6.3 8 3.6 11 6.3M5 9.7 8 12.4 11 9.7" stroke="#fff" stroke-width="1.5" fill="none" stroke-linecap="round" stroke-linejoin="round"/></svg><div class="t" style="left:1271.2px;top:740.8px;font-size:13.3px;">Zentrum</div>
<div class="t" style="right:235.0px;top:764.9px;font-size:13.3px;color:#141414">Vertikal:</div>
<div class="abs" style="left:1267.7px;top:760.5px;width:164.5px;height:20.9px;background:#fff;border:1px solid #cdd3da;border-radius:6px;box-shadow:0 .5px .5px rgba(0,0,0,.05)"></div><svg class="abs" style="left:1414.0px;top:763.0px" width="16" height="16" viewBox="0 0 16 16"><rect width="16" height="16" rx="4" fill="#157ef8"/><path d="M5 6.3 8 3.6 11 6.3M5 9.7 8 12.4 11 9.7" stroke="#fff" stroke-width="1.5" fill="none" stroke-linecap="round" stroke-linejoin="round"/></svg><div class="t" style="left:1271.2px;top:764.9px;font-size:13.3px;">Mitte</div>
<div class="t" style="left:1177.4px;top:656.0px;font-size:13px;font-weight:bold;color:#111">Text Position</div>
<div class="t" style="left:1177.4px;top:719.8px;font-size:13px;font-weight:bold;color:#111">Ausrichtung</div>
<div class="abs" style="left:1256px;top:466px;width:187px;height:2px;background:linear-gradient(90deg,rgba(232,100,100,0) 0,rgba(232,100,100,.85) 11px,rgba(232,100,100,.85) 177px,rgba(232,100,100,0) 100%)"></div>
<div class="abs" style="left:1256px;top:488px;width:187px;height:2px;background:linear-gradient(90deg,rgba(232,100,100,0) 0,rgba(232,100,100,.85) 11px,rgba(232,100,100,.85) 177px,rgba(232,100,100,0) 100%)"></div>
<div class="abs" style="left:1266px;top:457px;width:2px;height:41px;background:linear-gradient(rgba(232,100,100,0),rgba(232,100,100,.85) 10px,rgba(232,100,100,.85) 31px,rgba(232,100,100,0))"></div>
<div class="abs" style="left:1432px;top:457px;width:2px;height:41px;background:linear-gradient(rgba(232,100,100,0),rgba(232,100,100,.85) 10px,rgba(232,100,100,.85) 31px,rgba(232,100,100,0))"></div>
<svg class="abs" style="left:1300px;top:428px" width="100" height="100" viewBox="0 0 100 100"><defs><radialGradient id="rg"><stop offset=".5" stop-color="#fff" stop-opacity="0"/><stop offset="1" stop-color="#fff" stop-opacity=".6"/></radialGradient></defs><circle cx="49.8" cy="49.8" r="31" fill="url(#rg)"/><circle cx="49.8" cy="49.8" r="35" fill="none" stroke="rgba(118,148,182,.34)" stroke-width="7.6"/><circle cx="49.8" cy="49.8" r="38.4" fill="none" stroke="rgba(100,130,165,.35)" stroke-width="1"/><circle cx="49.8" cy="49.8" r="34.5" fill="none" stroke="rgba(100,130,165,.2)" stroke-width="1"/><path transform="translate(50.3 49.8)" d="M0 0V21.7L5.2 17.3 9.9 27.2 13.1 25.7 8.7 16.4 15.1 15.6z" fill="#fff" stroke="#111" stroke-width="1.3" stroke-linejoin="round"/></svg>
<div class="abs" style="left:1144px;top:107px;width:11px;height:691px;background:#e1e1e1"></div>
<div class="abs" style="left:1135px;top:340px;width:20px;height:144.5px;background:#1a82fb;border-radius:6px 0 0 6px"></div>
<div class="t" style="left:1145.5px;top:412px;width:0;height:0"><span style="position:absolute;left:0;top:0;transform:translate(-50%,-50%) rotate(-90deg);font-size:13px;color:#fff;letter-spacing:.25px">Eigenschafteneditor</span></div>
<div class="abs" style="left:1135px;top:489px;width:20px;height:81px;background:#d6d6d6;border-radius:6px 0 0 6px"></div>
<div class="t" style="left:1145.5px;top:529px;width:0;height:0"><span style="position:absolute;left:0;top:0;transform:translate(-50%,-50%) rotate(-90deg);font-size:13px;color:#333;letter-spacing:.25px">Layerliste</span></div>
<div id="rtb" class="abs"></div>
<div class="abs" style="left:1454px;top:107px;width:1px;height:691px;background:#c9c9c9"></div>
<div class="grip" style="left:1464px;top:115px;width:27px;height:4px;background:radial-gradient(circle,#9a9a9a 1px,transparent 1.3px) 0 0/6px 4px"></div>
<div class="sel" style="left:1456px;top:120.0px;width:50px;height:42.3px;border-radius:7px"></div>
<div class="sel" style="left:1456px;top:269.0px;width:50px;height:42.8px;border-radius:7px"></div>
<div class="sel" style="left:1456px;top:418.8px;width:50px;height:41.6px;border-radius:7px"></div>
<div class="abs" style="left:1458px;top:261px;width:42px;height:1px;background:linear-gradient(90deg,#6e6e6e 50%,transparent 50%) 0 0/3px 1px"></div>
<div class="abs" style="left:1458px;top:411px;width:42px;height:1px;background:linear-gradient(90deg,#6e6e6e 50%,transparent 50%) 0 0/3px 1px"></div>
<div class="rb" style="top:127.0px"></div>
<svg class="abs" style="left:1463px;top:127.0px" width="28" height="28" viewBox="0 0 28 28"><path d="M8 21l3-11 7-3-2 12z" fill="#bbb" stroke="#444" stroke-width=".7"/><path d="M11 19l5-9 2 8z" fill="#fff" stroke="#e33" stroke-width=".8"/></svg>
<div class="rb" style="top:174.4px"></div>
<svg class="abs" style="left:1463px;top:174.4px" width="28" height="28" viewBox="0 0 28 28"><rect x="7" y="11" width="11" height="8" fill="#f3e6b0" stroke="#333" stroke-width=".8"/><circle cx="16" cy="18" r="4.5" fill="#f3e6b0" stroke="#333" stroke-width=".8" fill-opacity=".7"/></svg>
<div class="rb" style="top:220.0px"></div>
<svg class="abs" style="left:1463px;top:220.0px" width="28" height="28" viewBox="0 0 28 28"><rect x="6" y="11" width="16" height="10" rx="2" fill="#eef1f6" stroke="#b8c8e0" stroke-width=".8"/></svg>
<div class="rb" style="top:276.0px"></div>
<svg class="abs" style="left:1463px;top:276.0px" width="28" height="28" viewBox="0 0 28 28"><rect x="4" y="9" width="3" height="2.5" fill="#000"/><rect x="4" y="14" width="3" height="2.5" fill="#000"/><rect x="4" y="19" width="3" height="2.5" fill="#000"/><path d="M9 9.2h14v2.2H9zM9 14.2h14v2.2H9zM9 19.2h14v2.2H9z" fill="none" stroke="#222" stroke-width=".7"/></svg>
<div class="rb" style="top:323.0px"></div>
<svg class="abs" style="left:1463px;top:323.0px" width="28" height="28" viewBox="0 0 28 28"><path d="M6 10h16l-6 7v5l-4 2v-7z" fill="#aaa" stroke="#333" stroke-width=".8"/></svg>
<div class="rb" style="top:368.5px"></div>
<svg class="abs" style="left:1463px;top:368.5px" width="28" height="28" viewBox="0 0 28 28"><path d="M5 8v16l7-4h8v-8h-8z" fill="#eee" stroke="#333" stroke-width=".8"/><rect x="13" y="12" width="8" height="8" fill="#888"/><path d="M3 16h22" stroke="#e66" stroke-width=".6"/></svg>
<div class="rb" style="top:425.0px"></div>
<svg class="abs" style="left:1463px;top:425.0px" width="28" height="28" viewBox="0 0 28 28"><path d="M4 10h12M4 13h10M4 16h12M4 19h10" stroke="#666" stroke-width=".6"/><path d="M1 23h26" stroke="#333" stroke-width=".7"/></svg>
<div class="rb" style="top:472.0px"></div>
<svg class="abs" style="left:1463px;top:472.0px" width="28" height="28" viewBox="0 0 28 28"><rect x="8" y="9" width="13" height="16" fill="#c9912d" stroke="#7a5520" stroke-width=".6"/><rect x="9.8" y="11" width="9.5" height="12.5" fill="#f6f6f6"/><rect x="11.5" y="8" width="6" height="3" fill="#888"/></svg>
<div id="status" class="abs"></div>
<div class="abs" style="left:0;top:797px;width:1500px;height:1px;background:#cfcfcf"></div>
<div class="t" style="left:2.0px;top:806.6px;font-size:10.3px;color:#1a1a1a">289.8922,46.6177</div>
<div class="t" style="left:2.0px;top:827.0px;font-size:10.3px;color:#1a1a1a">@289.8922,46.6177</div>
<div class="abs" style="left:253px;top:802px;width:1px;height:40px;background:#777"></div>
<div class="t" style="left:256.5px;top:806.6px;font-size:10.3px;color:#1a1a1a">293.6166&lt;9°</div>
<div class="t" style="left:256.5px;top:827.0px;font-size:10.3px;color:#1a1a1a">@293.6166&lt;9°</div>
<div class="abs" style="left:506.4px;top:818.8px;width:6px;height:6px;border-radius:3px;background:#c6c6c6"></div>
<div class="abs" style="left:940.0px;top:818.8px;width:6px;height:6px;border-radius:3px;background:#c6c6c6"></div>
<div class="abs" style="left:1269.0px;top:818.8px;width:6px;height:6px;border-radius:3px;background:#c6c6c6"></div>
<div class="t" style="right:800.7px;top:811.7px;font-size:10px;color:#1a1a1a">Element oder Bereich selektieren</div>
<div class="t" style="right:800.7px;top:822.5px;font-size:10px;color:#1a1a1a">Element oder Referenzpunkt verschieben</div>
<svg class="abs" style="left:717px;top:805px" width="20" height="32" viewBox="0 0 20 32"><rect x="1.2" y="1.2" width="17.5" height="29.5" rx="8.7" fill="#fff" stroke="#555" stroke-width="1"/><path d="M1.5 14h17M10 1.5v5" stroke="#555" stroke-width="1"/><ellipse cx="10" cy="6.5" rx="2" ry="3.5" fill="#fff" stroke="#555" stroke-width=".9"/></svg>
<div class="t" style="left:949.0px;top:811.7px;font-size:10px;color:#1a1a1a;letter-spacing:.12px">Selektierte Objekte:</div>
<div class="t" style="left:949.0px;top:822.5px;font-size:10px;color:#1a1a1a;letter-spacing:.12px">149 Objekte auf Layer "0".</div>
</body></html>
